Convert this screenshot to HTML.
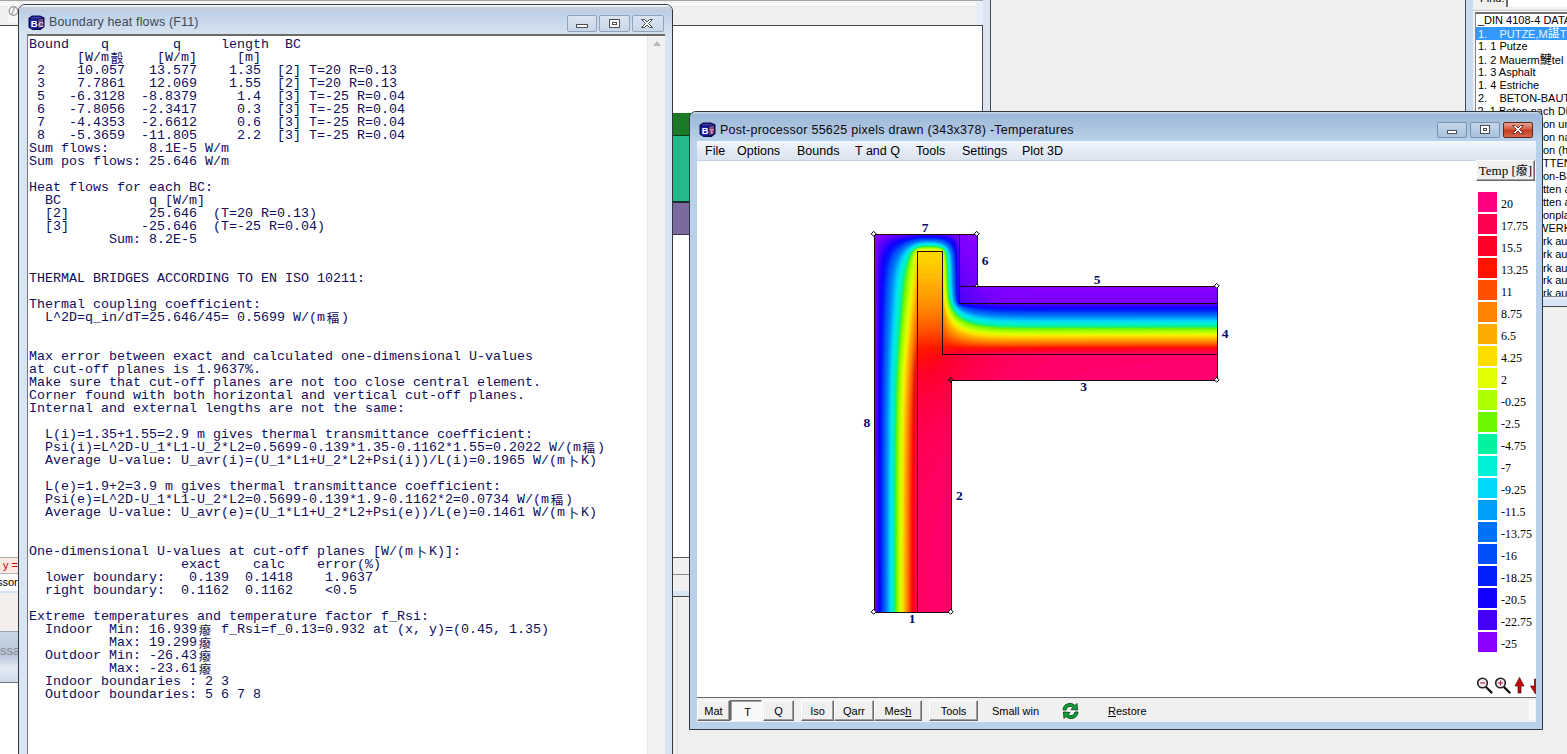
<!DOCTYPE html>
<html><head><meta charset="utf-8"><title>Boundary heat flows</title>
<style>
*{box-sizing:border-box;margin:0;padding:0}
html,body{width:1567px;height:754px;overflow:hidden;background:#f0f0f0}
body{position:relative;font-family:"Liberation Sans","Noto Sans CJK SC",sans-serif;font-size:12px;color:#000}
.a{position:absolute}
/* background app */
#bgwhite{left:0;top:26px;width:982px;height:531px;background:#fff}
#bgbot{left:0;top:557px;width:983px;height:1px;background:#555}
#bgw2{left:0;top:683px;width:19px;height:71px;background:#fff}
#ms1{left:672px;top:574px;width:18px;height:1px;background:#8c8c8c}
#ms2{left:672px;top:591px;width:18px;height:6px;background:#d7e4f2;border-bottom:1px solid #444}
#ms3{left:677px;top:598px;width:1px;height:156px;background:#dcdcdc}
#bgline{left:0;top:25px;width:983px;height:1px;background:#4a4a4a}
#bgvline{left:982px;top:25px;width:1px;height:533px;background:#4a4a4a}
#bgframe{left:983px;top:0;width:7px;height:120px;background:#dbe5f2}
#bgfline{left:990px;top:0;width:1px;height:120px;background:#3f4a55}
#topstrip{left:0;top:0;width:984px;height:7px;background:linear-gradient(#a4a4a4 0,#a4a4a4 1px,#f3f3f3 1px,#f3f3f3 3px,#fafafa 3px,#fafafa 6px,#e6e6e6 6px)}
#toppatch{left:976px;top:1px;width:7px;height:24px;background:#e8eef6}
/* left strip */
#ls1{left:0;top:557px;width:19px;height:17px;background:#fbe9e4;border-top:1px solid #a9a9a9;border-bottom:1px solid #b8b8b8;color:#c00000;font-size:11px;line-height:15px;padding-left:3px;white-space:nowrap;overflow:hidden}
#ls2{left:0;top:574px;width:19px;height:17px;background:#fff;font-size:11px;line-height:16px;white-space:nowrap;overflow:hidden}
#ls3{left:0;top:591px;width:19px;height:41px;background:#f3efec;border-top:2px solid #d3e1f0;border-bottom:1px solid #9aa3ad}
#ls4{left:0;top:632px;width:19px;height:51px;background:linear-gradient(#c9d6e5 0,#b6c6d9 45%,#e3eaf3 72%,#cfdae8 100%);border-bottom:1px solid #6f7a86;color:#878c93;font-size:13px;line-height:38px;white-space:nowrap;overflow:hidden}
/* colour bars */
#gb1{left:672px;top:113px;width:30px;height:22px;background:#1b7a26}
#gb2{left:672px;top:135px;width:30px;height:66px;background:#24b98a;border-top:1px solid #0d3a1a}
#gb3{left:672px;top:201px;width:30px;height:34px;background:#7a6a9e;border-top:2px solid #1d2a30;border-bottom:1px solid #3a3550}
/* windows */
.win{border:1px solid #2f3740;border-radius:7px 7px 0 0}
#w1{left:18px;top:4px;width:655px;height:760px;background:#d7e4f2}
#w1 .tb{left:-1px;top:0;width:653px;height:29px;border-radius:6px 6px 0 0;background:linear-gradient(#fdfeff 0,#fdfeff 1px,#c9d0de 2px,#c2cde0 5px,#bcd0e8 8px,#c4d4e8 12px,#d6e2ef 29px)}
#w1 .title{left:29px;top:9px;font-size:12.5px;letter-spacing:.16px;line-height:16px;color:#3e4a59;white-space:nowrap}
#w1 .client{left:7px;top:29px;width:638px;height:730px;background:#fff;border-left:1px solid #7a7a7a;border-top:2px solid #6a6a6a}
#w1 .sb{right:0;top:0;width:18px;height:730px;background:#f1f1f1;border-left:1px solid #e6e6e6}
#w1 pre{left:1px;top:2px;font-family:"Liberation Mono","Noto Sans CJK SC",monospace;font-size:13.333px;line-height:13px;color:#0d0d62;white-space:pre}
.cj{display:inline-block;width:16px;text-align:center;font-size:12.5px;line-height:13px;vertical-align:top;font-family:"Noto Sans CJK SC",sans-serif}
.cj2{font-family:"Noto Sans CJK SC",sans-serif;font-size:12px;line-height:12px}
.cbtn{top:10px;height:17px;border:1px solid #8fa3ba;border-radius:2px;background:linear-gradient(#dbe5f2,#c7d6e8)}
#w2{left:689px;top:111px;width:854px;height:619px;background:#b9d1ea;border-radius:7px 7px 0 0}
#w2 .tb{left:-1px;top:0;width:852px;height:29px;border-radius:6px 6px 0 0;background:linear-gradient(#d5e2f1 0,#9fb9d8 8%,#a9c2df 50%,#b9d1ea 100%)}
#w2 .title{left:29px;top:10px;font-size:12.5px;letter-spacing:.26px;line-height:16px;color:#0c0c0c;white-space:nowrap}
#w2 .menu{left:6px;top:29px;width:839px;height:20px;background:linear-gradient(#f3f6fb 0,#e4ebf5 50%,#d9e3f0 100%);border-bottom:1px solid #c3d1e2}
#w2 .menu span{position:absolute;top:2px;font-size:12.5px;line-height:16px;white-space:nowrap}
#w2 .client{left:6px;top:49px;width:839px;height:537px;background:#fff}
#w2 .tool{left:6px;top:585px;width:839px;height:25px;background:#f0f0f0;border-top:1px solid #6a6a6a}
.b3{position:absolute;top:2px;height:21px;background:#f0f0f0;border:1px solid;border-color:#fff #696969 #696969 #fff;box-shadow:inset -1px -1px 0 #a0a0a0;font-size:11px;line-height:21px;text-align:center;white-space:nowrap}
.b3.dn{border-color:#696969 #fff #fff #696969;box-shadow:inset 1px 1px 0 #a0a0a0;background:#f8f8f8;line-height:23px}
.tt{position:absolute;top:2px;font-size:11px;line-height:23px;white-space:nowrap}
/* legend */
.lb{position:absolute;left:1478px;width:19px;height:20px}
.lt{position:absolute;left:1501px;font-family:"Liberation Serif",serif;font-size:12px;line-height:14px;white-space:nowrap}
#tempbtn{left:1476px;top:160px;width:59px;height:21px;background:#f0f0f0;border:1px solid;border-color:#fff #696969 #696969 #fff;box-shadow:inset -1px -1px 0 #a0a0a0;font-family:"Liberation Serif","Noto Sans CJK SC",serif;font-size:13px;line-height:19px;text-align:center;white-space:nowrap}
.bn{position:absolute;width:20px;text-align:center;font-family:"Liberation Serif",serif;font-weight:bold;font-size:13.5px;line-height:14px;color:#06066a}
/* right panel */
#rp{left:1465px;top:0;width:102px;height:307px;background:#f0f0f0;border-left:1px solid #3f4a55;border-bottom:1px solid #3f4a55}
#rpf{left:1466px;top:0;width:7px;height:306px;background:#c9dbee}
#rpb{left:1466px;top:297px;width:101px;height:9px;background:linear-gradient(#eef2f8 0,#d7e4f2 35%,#d7e4f2 100%)}
#lbx{left:1475px;top:12px;width:100px;height:285px;border-bottom:0;background:#fff;border:1px solid #828790;border-top:2px solid #6d6d6d}
.li{position:absolute;left:1478px;height:13px;font-size:11px;line-height:13px;white-space:nowrap}
.li.sel{background:#3399ff;color:#e6f6ff;width:100px;left:1476px;padding-left:2px}
</style></head><body>
<div class="a" id="topstrip"></div><div class="a" id="toppatch"></div>
<div class="a" id="bgwhite"></div><div class="a" id="bgbot"></div><div class="a" id="bgw2"></div><div class="a" id="ms1"></div><div class="a" id="ms2"></div><div class="a" id="ms3"></div><div class="a" id="bgline"></div><div class="a" id="bgvline"></div>
<div class="a" id="bgframe"></div><div class="a" id="bgfline"></div>
<svg class="a" style="left:6px;top:1px" width="14" height="23" viewBox="0 0 14 23"><rect x="2" y="1" width="12" height="21" fill="#f7f7f7"/><circle cx="7.500" cy="10" r="4.300" fill="#fcfcfc" stroke="#9c9c9c" stroke-width="1.400"/><path d="M5.500 13.500L9 5.500" stroke="#a6a6a6" stroke-width="1.300" fill="none"/></svg>
<div class="a" id="ls1">y =</div><div class="a" id="ls2"><span style="margin-left:-3px">ssor</span></div><div class="a" id="ls3"></div><div class="a" id="ls4">ssa</div>
<div class="a" id="gb1"></div><div class="a" id="gb2"></div><div class="a" id="gb3"></div>

<!-- right panel -->
<div class="a" id="rp"></div><div class="a" id="rpf"></div><div class="a" id="rpb"></div>
<div class="a" style="left:1480px;top:-8px;font-size:11px;line-height:13px">Find:</div>
<div class="a" style="left:1506px;top:-6px;width:70px;height:13px;background:#fff;border-left:2px solid #6d6d6d"></div><div class="a" style="left:1473px;top:10px;width:94px;height:2px;background:linear-gradient(#c8c8c8 50%,#fff 50%)"></div>
<div class="a" id="lbx"></div>
<div class="li" style="top:14px">_DIN 4108-4 DATA</div>
<div class="li sel" style="top:27px">1.&nbsp;&nbsp;&nbsp;&nbsp;PUTZE,M<span class=cj2>諶</span>TEL</div>
<div class="li" style="top:40px">1. 1 Putze</div>
<div class="li" style="top:53px">1. 2 Mauerm<span class=cj2>鰎</span>tel</div>
<div class="li" style="top:66px">1. 3 Asphalt</div>
<div class="li" style="top:79px">1. 4 Estriche</div>
<div class="li" style="top:92px">2.&nbsp;&nbsp;&nbsp;&nbsp;BETON-BAUTEILE</div>
<div class="li" style="top:105px;left:auto;right:24px">2. 1 Beton na</div><div class="li" style="top:105px;left:1543px">ch DIN EN 206</div>
<div class="li" style="top:118px;left:auto;right:24px">2. 2 Leichtbet</div><div class="li" style="top:118px;left:1543px">on und Stahlleichtbeton</div>
<div class="li" style="top:131px;left:auto;right:24px">2. 3 Porenbet</div><div class="li" style="top:131px;left:1543px">on nach DIN 4223</div>
<div class="li" style="top:144px;left:auto;right:24px">2. 4 Leichtbet</div><div class="li" style="top:144px;left:1543px">on (haufwerkporig)</div>
<div class="li" style="top:157px;left:auto;right:24px">3.&nbsp;&nbsp;&nbsp;&nbsp;BAUPLA</div><div class="li" style="top:157px;left:1543px">TTEN</div>
<div class="li" style="top:170px;left:auto;right:24px">3. 1 Porenbet</div><div class="li" style="top:170px;left:1543px">on-Bauplatten</div>
<div class="li" style="top:183px;left:auto;right:24px">3. 2 Wandbaupla</div><div class="li" style="top:183px;left:1543px">tten aus Leichtbeton</div>
<div class="li" style="top:196px;left:auto;right:24px">3. 3 Wandbaupla</div><div class="li" style="top:196px;left:1543px">tten aus Gips</div>
<div class="li" style="top:209px;left:auto;right:24px">3. 4 Gipskart</div><div class="li" style="top:209px;left:1543px">onplatten</div>
<div class="li" style="top:222px;left:auto;right:24px">4.&nbsp;&nbsp;&nbsp;&nbsp;MAUER</div><div class="li" style="top:222px;left:1543px"><span style="margin-left:-5px">WERK</span></div>
<div class="li" style="top:235px;left:auto;right:24px">4. 1 Mauerwe</div><div class="li" style="top:235px;left:1543px">rk aus Mauerziegeln</div>
<div class="li" style="top:248px;left:auto;right:24px">4. 2 Mauerwe</div><div class="li" style="top:248px;left:1543px">rk aus Kalksandsteinen</div>
<div class="li" style="top:261px;left:auto;right:24px">4. 3 Mauerwe</div><div class="li" style="top:261px;left:1543px">rk aus H<span class=cj2>黷</span>tensteinen</div>
<div class="li" style="top:274px;left:auto;right:24px">4. 4 Mauerwe</div><div class="li" style="top:274px;left:1543px">rk aus Porenbeton</div>
<div class="li" style="top:287px;left:auto;right:24px;height:9px;overflow:hidden">4. 5 Mauerwe</div><div class="li" style="top:287px;left:1543px;height:9px;overflow:hidden">rk aus Betonsteinen</div>


<!-- left window -->
<div class="a win" id="w1"><div class="a" style="left:1px;top:0;width:652px;height:758px">
 <div class="a tb"></div>
 <svg class="a" style="left:8px;top:10px" width="17" height="16" viewBox="0 0 17 16"><path d="M4,0.500H12L16.500,2.500V12L12.500,15H4.500L0.500,12.500V3Z" fill="#0b0b55"/><path d="M2,4.500H9V13.500H3.500L2,12.500Z" fill="#2424b4"/><path d="M3,2.500L5,1.800H11.500L14.500,3L9.500,3.800H3Z" fill="#3a3ab0"/><path d="M10.200,4.500L15,3.500V11.500L10.200,13.500Z" fill="#6d4f86"/><text x="2.700" y="12.300" font-family="Liberation Sans,sans-serif" font-weight="bold" font-size="9.500" fill="#fff">B</text><text x="10.300" y="11.600" font-family="Liberation Sans,sans-serif" font-weight="bold" font-size="7.500" fill="#e8cfe4">C</text></svg>
 <div class="a title">Boundary heat flows (F11)</div>
 <div class="a cbtn" style="left:547px;width:30px"></div>
 <div class="a cbtn" style="left:579px;width:31px"></div>
 <div class="a cbtn" style="left:612px;width:32px"></div>
 <svg class="a" style="left:547px;top:10px" width="98" height="18" viewBox="0 0 98 18"><g fill="#fff" stroke="#4a4f57" stroke-width="1"><rect x="9.5" y="9.5" width="11" height="3"/><rect x="42.5" y="4.5" width="10" height="8"/><rect x="45.5" y="7.5" width="4" height="2"/><path d="M74.500 4.500h3l2.500 2.500 2.500-2.500h3l-4 4 4 4h-3l-2.500-2.500-2.500 2.500h-3l4-4z"/></g></svg>
 <div class="a client"><div class="a sb"><svg class="a" style="left:5px;top:5px" width="8" height="5"><path d="M0 5L4 0L8 5Z" fill="#b9b9b9"/></svg></div><pre class="a">Bound    q        q     length  BC
      [W/m<span class="cj">瞉</span>    [W/m]     [m]
 2    10.057   13.577    1.35  [2] T=20 R=0.13
 3    7.7861   12.069    1.55  [2] T=20 R=0.13
 5   -6.3128  -8.8379     1.4  [3] T=-25 R=0.04
 6   -7.8056  -2.3417     0.3  [3] T=-25 R=0.04
 7   -4.4353  -2.6612     0.6  [3] T=-25 R=0.04
 8   -5.3659  -11.805     2.2  [3] T=-25 R=0.04
Sum flows:     8.1E-5 W/m
Sum pos flows: 25.646 W/m

Heat flows for each BC:
  BC           q [W/m]
  [2]          25.646  (T=20 R=0.13)
  [3]         -25.646  (T=-25 R=0.04)
          Sum: 8.2E-5


THERMAL BRIDGES ACCORDING TO EN ISO 10211:

Thermal coupling coefficient:
  L^2D=q_in/dT=25.646/45= 0.5699 W/(m<span class="cj">稫</span>)


Max error between exact and calculated one-dimensional U-values
at cut-off planes is 1.9637%.
Make sure that cut-off planes are not too close central element.
Corner found with both horizontal and vertical cut-off planes.
Internal and external lengths are not the same:

  L(i)=1.35+1.55=2.9 m gives thermal transmittance coefficient:
  Psi(i)=L^2D-U_1*L1-U_2*L2=0.5699-0.139*1.35-0.1162*1.55=0.2022 W/(m<span class="cj">稫</span>)
  Average U-value: U_avr(i)=(U_1*L1+U_2*L2+Psi(i))/L(i)=0.1965 W/(m<span class="cj">卜</span>K)

  L(e)=1.9+2=3.9 m gives thermal transmittance coefficient:
  Psi(e)=L^2D-U_1*L1-U_2*L2=0.5699-0.139*1.9-0.1162*2=0.0734 W/(m<span class="cj">稫</span>)
  Average U-value: U_avr(e)=(U_1*L1+U_2*L2+Psi(e))/L(e)=0.1461 W/(m<span class="cj">卜</span>K)


One-dimensional U-values at cut-off planes [W/(m<span class="cj">卜</span>K)]:
                   exact    calc    error(%)
  lower boundary:   0.139  0.1418    1.9637
  right boundary:  0.1162  0.1162    &lt;0.5

Extreme temperatures and temperature factor f_Rsi:
  Indoor  Min: 16.939<span class="cj">癈</span> f_Rsi=f_0.13=0.932 at (x, y)=(0.45, 1.35)
          Max: 19.299<span class="cj">癈</span>
  Outdoor Min: -26.43<span class="cj">癈</span>
          Max: -23.61<span class="cj">癈</span>
  Indoor boundaries : 2 3
  Outdoor boundaries: 5 6 7 8</pre></div>
</div></div>

<!-- post-processor window -->
<div class="a win" id="w2"><div class="a" style="left:1px;top:0;width:851px;height:617px">
 <div class="a tb"></div>
 <svg class="a" style="left:8px;top:10px" width="17" height="16" viewBox="0 0 17 16"><path d="M4,0.500H12L16.500,2.500V12L12.500,15H4.500L0.500,12.500V3Z" fill="#0b0b55"/><path d="M2,4.500H9V13.500H3.500L2,12.500Z" fill="#2424b4"/><path d="M3,2.500L5,1.800H11.500L14.500,3L9.500,3.800H3Z" fill="#3a3ab0"/><path d="M10.200,4.500L15,3.500V11.500L10.200,13.500Z" fill="#6d4f86"/><text x="2.700" y="12.300" font-family="Liberation Sans,sans-serif" font-weight="bold" font-size="9.500" fill="#fff">B</text><text x="10.300" y="11.600" font-family="Liberation Sans,sans-serif" font-weight="bold" font-size="7.500" fill="#ff8fa0">T</text></svg>
 <div class="a title">Post-processor 55625 pixels drawn (343x378) -Temperatures</div>
 <div class="a cbtn" style="left:746px;top:10px;width:30px;height:16px;border-color:#7a93b3;background:linear-gradient(#c5d6ea,#a9c0dc)"></div>
 <div class="a cbtn" style="left:779px;top:10px;width:30px;height:16px;border-color:#7a93b3;background:linear-gradient(#c5d6ea,#a9c0dc)"></div>
 <div class="a cbtn" style="left:812px;top:10px;width:30px;height:16px;border-color:#5a2a20;background:linear-gradient(#e9a394 0,#d6593f 45%,#c13a1e 50%,#d8694a 100%)"></div>
 <svg class="a" style="left:744px;top:10px" width="100" height="17" viewBox="0 0 100 17"><g fill="#fff" stroke="#4a4f57" stroke-width="1"><rect x="12.500" y="8.500" width="9" height="3"/><rect x="45.500" y="3.500" width="9" height="8"/><rect x="48.500" y="6.500" width="3" height="2"/><path d="M77.500 3.500h3l2.500 2.500 2.500-2.500h3l-4 4 4 4h-3l-2.500-2.500-2.500 2.500h-3l4-4z" stroke="#6a3a30"/></g></svg>
 <div class="a menu"><span style="left:8px">File</span><span style="left:40px">Options</span><span style="left:100px">Bounds</span><span style="left:158px">T and Q</span><span style="left:219px">Tools</span><span style="left:265px">Settings</span><span style="left:325px">Plot 3D</span></div>
 <div class="a client"></div>
 <div class="a tool">
  <div class="b3" style="left:0;width:33px">Mat</div><div class="b3 dn" style="left:33px;width:32px;padding-left:3px">T</div><div class="b3" style="left:66px;width:31px">Q</div>
  <div class="b3" style="left:104px;width:33px">Iso</div><div class="b3" style="left:137px;width:40px">Qarr</div><div class="b3" style="left:177px;width:48px">Mes<u>h</u></div>
  <div class="b3" style="left:232px;width:49px">Tools</div>
  <div class="tt" style="left:295px">Small win</div>
  <svg class="a" style="left:364px;top:4px" width="19" height="18" viewBox="0 0 19 18"><g fill="#12a03a" stroke="#0a4a1a" stroke-width=".9"><path d="M2 8 A7 7 0 0 1 14 3.500 L16 1.500 L16.500 8 L10 7.500 L12 5.500 A4.200 4.200 0 0 0 5 8 Z"/><path d="M17 10 A7 7 0 0 1 5 14.500 L3 16.500 L2.500 10 L9 10.500 L7 12.500 A4.200 4.200 0 0 0 14 10 Z"/></g></svg>
  <div class="tt" style="left:411px"><u>R</u>estore</div>
  <div class="a" style="right:1px;top:2px;width:6px;height:20px;background:#f7f7f7;border-left:1px solid #fff;border-right:1px solid #fdfdfd"></div>
 </div>
</div></div>

<!-- plot -->
<svg class="a" style="left:865px;top:224px" width="365" height="400" viewBox="-10 -10 365 400">
<defs><clipPath id="dom"><path d="M-1,0H102V52H343V146H76V378.500H-1Z"/></clipPath></defs>
<g clip-path="url(#dom)"><rect x="-2" y="-2" width="347" height="382" fill="#8700ff"/><path fill="#7e00fe" d="M16.2,-1.5 79.5,-1.5 79.5,0.5 82.5,1.2 83.4,1.5 84.4,2.5 84.5,2.8 86.5,3.2 89.5,4.4 92.5,6.2 94.5,7.8 96.5,9.8 98.5,12.3 99.8,14.5 101.5,17.8 136.5,17.8 136.8,18.5 134.4,21.5 134,22.5 134,53.5 136.5,54 146.5,55.5 156.5,56.6 168.5,57.3 182.5,57.7 217.5,57.9 344.5,57.9 344.5,379.5 -1.5,379.5 -1.5,19.2 0.5,19.2 0.8,12.5 1.3,8.5 2.1,5.5 2.5,4.5 3.3,3.5 4.5,2.5 5.5,2 7.2,1.5 10.5,0.9 16.2,0.5Z"/><path fill="#7500fd" d="M28.3,-1.5 73.9,-1.5 73.9,0.5 78.5,1 80.3,1.5 81.5,2 82.5,2.9 82.9,3.5 83.3,4.5 84.1,8.5 84.5,13.3 87.2,15.5 89.5,17.9 92.2,21.5 94.1,24.5 96.1,28.5 97.8,32.5 99.5,36.9 101.5,42.9 111.5,42.9 111.6,43.5 108.4,47.5 108.1,48.5 108.1,53.5 127.5,64.1 132.5,66.5 137.6,68.5 179.5,68.7 344.5,68.8 344.5,379.5 -1.5,379.5 -1.5,79.4 0.5,79.4 0.7,35.5 1,24.5 1.4,17.5 1.9,12.5 2.3,10.5 2.8,8.5 3.7,6.5 4.5,5.3 5.5,4.3 6.7,3.5 8.5,2.7 10.5,2.1 12.5,1.7 18.5,1 28.3,0.5Z"/><path fill="#6b00fd" d="M37.6,-1.5 67.8,-1.5 67.8,0.5 73.5,0.8 77.5,1.4 79.5,2 80.5,2.5 81.5,3.3 82.4,4.5 82.7,5.5 83.3,8.5 84.1,15.5 84.5,24.6 87.5,29 90.5,34.1 93.5,39.8 98.4,49.5 100.7,53.5 102.5,55.7 110.6,63.5 115.2,68.5 133.5,69.1 160.5,69.4 344.5,69.4 344.5,379.5 0.6,379.5 0.7,172.5 0.9,75.5 1.2,36.5 1.6,25.5 2.1,18.5 2.4,15.5 3,12.5 3.5,10.5 4.3,8.5 5.5,6.7 6.5,5.6 8.5,4.2 10.1,3.5 12.5,2.7 15.5,2.1 18.5,1.7 26.5,1 37.6,0.5Z"/><path fill="#6200fc" d="M25.2,1.5 33.5,0.9 43.5,0.6 56.5,0.5 66.5,0.7 71.5,1 75.6,1.5 78.5,2.3 79.5,2.8 80.6,3.5 81.5,4.5 82.4,6.5 82.9,8.5 83.2,10.5 84,21.5 84.5,37.7 94.8,53.5 102.8,64.5 105.3,68.5 114.5,69.1 123.2,69.5 144.5,69.7 344.5,69.8 344.5,379.5 0.9,379.5 0.9,197.5 1.1,115.5 1.5,49.5 1.7,35.5 2.2,25.5 2.8,18.5 3.8,13.5 4.4,11.5 5.3,9.5 6.5,7.6 7.5,6.6 8.8,5.5 10.5,4.6 13.5,3.4 18.5,2.3Z"/><path fill="#5900fb" d="M29.6,1.5 37.5,1 46.5,0.7 58.5,0.7 67.5,1 72.5,1.4 76.5,2.2 78.5,2.9 79.5,3.5 80.5,4.4 81.5,5.8 82.1,7.5 82.8,10.5 83.1,13.5 83.8,26.5 84.5,49.1 90.5,56.5 93.5,60.5 96.2,64.5 98.4,68.5 110.7,69.5 124.5,69.9 142.5,70.1 344.5,70.2 344.5,379.5 1.2,379.5 1.2,199.5 1.4,118.5 1.9,50.5 2.2,36.5 2.7,26.5 3.4,19.5 4,16.5 4.5,14.4 5.1,12.5 6,10.5 7.3,8.5 8.5,7.3 9.5,6.4 11.5,5.2 13.5,4.4 16.2,3.5 21.5,2.4Z"/><path fill="#4f00fb" d="M33.6,1.5 41.5,1.1 50.5,0.9 61.5,1 68.5,1.3 73.5,1.9 76.5,2.7 78.5,3.6 79.7,4.5 80.5,5.4 81.5,7.2 82.2,9.5 82.7,12.5 83,15.5 83.3,21.5 84.5,57.6 87.5,60.8 89.5,63.2 91.1,65.5 92.8,68.5 103.2,69.5 108.5,69.7 122.5,70.2 139.5,70.4 179.5,70.5 344.5,70.5 344.5,379.5 1.5,379.5 1.5,201.5 1.7,121.5 2.3,52.5 2.6,37.5 3.2,27.5 3.6,23.5 4.2,19.5 4.8,16.5 5.4,14.5 6.2,12.5 7.2,10.5 8.5,8.8 9.9,7.5 11.5,6.3 13.5,5.3 15.5,4.5 18.5,3.6 21.5,3 25.5,2.3Z"/><path fill="#4600fa" d="M37.5,1.5 45.5,1.2 54.5,1.1 62.5,1.2 68.5,1.6 72.5,2.1 75.5,2.8 77.3,3.5 78.5,4.2 79.9,5.5 80.6,6.5 81.1,7.5 81.8,9.5 82.4,12.5 82.8,16.5 83.2,24.5 83.8,47.5 84.5,64.2 86.5,66.2 88.1,68.5 97.7,69.5 107.5,70 121.5,70.5 138.5,70.7 177.5,70.9 344.5,70.9 344.5,379.5 1.8,379.5 1.8,202.5 2.1,122.5 2.7,52.5 3.1,37.5 3.8,27.5 4.2,23.5 4.9,19.5 5.6,16.5 6.3,14.5 7.2,12.5 8.5,10.5 9.5,9.2 11.5,7.5 13,6.5 15,5.5 17.7,4.5 20.5,3.7 24.5,2.9 28.5,2.3Z"/><path fill="#3f00fb" d="M41.7,1.5 49.5,1.3 57.5,1.3 64.5,1.5 69.5,1.9 73.5,2.6 76.2,3.5 77.5,4.2 78.5,4.9 80,6.5 81,8.5 81.7,10.5 82.2,13.5 82.7,18.5 83.1,27.5 83.5,49.1 84.5,68.5 93.4,69.5 106.5,70.3 120.5,70.8 136.5,71.1 175.5,71.2 344.5,71.2 344.5,379.5 2.1,379.5 2.1,202.5 2.4,122.5 2.8,77.5 3.1,52.5 3.6,37.5 4.3,27.5 4.8,23.5 5.5,20 6.1,17.5 7.2,14.5 8.2,12.5 9.5,10.7 10.5,9.5 12.5,7.8 14.7,6.5 16.9,5.5 19.9,4.5 23.5,3.6 27.5,2.9 31.5,2.3 36.5,1.8Z"/><path fill="#3900fb" d="M48,1.5 55.5,1.5 62.5,1.6 67.5,2 71.4,2.5 74.5,3.3 77.2,4.5 78.5,5.5 79.4,6.5 80.1,7.5 81,9.5 81.6,11.5 82.1,14.5 82.5,18.5 82.9,27.5 83.5,56.7 84.1,65.5 84.3,68.5 84.5,68.7 90.2,69.5 106.5,70.6 120.5,71.1 136.5,71.4 175.5,71.6 344.5,71.6 344.5,379.5 2.4,379.5 2.4,202.5 2.7,122.5 3.1,77.5 3.5,52.5 4.1,37.5 4.9,27.5 5.5,23.5 6.1,20.5 6.9,17.5 8.1,14.5 9.3,12.5 10.8,10.5 12.5,8.9 14.5,7.5 16.5,6.4 19.5,5.2 23.5,4.1 27.5,3.3 32.5,2.5 37.5,2 42.5,1.7Z"/><path fill="#3200fc" d="M35,2.5 42.5,1.9 51.5,1.6 60.5,1.7 67.5,2.2 70.5,2.6 72.5,3.1 75.5,4.1 76.5,4.6 77.8,5.5 78.8,6.5 79.5,7.4 80.5,9.3 81.2,11.5 81.8,14.5 82.3,18.5 82.7,27.5 83.5,62 84,67.5 84.2,68.5 84.5,68.8 88.5,69.6 105.5,70.8 119.5,71.4 135.5,71.8 174.5,71.9 344.5,71.9 344.5,379.5 2.7,379.5 2.7,212.5 3,134.5 3.3,93.5 3.8,59.5 4.2,43.5 4.9,32.5 5.3,28.5 5.9,24.5 6.5,21.5 7.4,18.5 8.5,15.6 9.5,13.7 10.5,12.2 12,10.5 13.5,9.1 15.5,7.8 17.9,6.5 20.4,5.5 23.5,4.6 26.5,3.9 30.5,3.1Z"/><path fill="#2b00fd" d="M37.5,2.5 44.5,2 52.5,1.8 61.5,2 67.5,2.4 71.5,3.1 74.5,4.1 75.5,4.5 77.1,5.5 78.2,6.5 79,7.5 80.2,9.5 81.1,12.5 81.7,15.5 82.2,19.5 82.6,27.5 83.1,54.5 83.5,65.5 84.1,68.5 84.5,69 86.4,69.5 97.5,70.6 109.5,71.4 122.5,71.9 138.5,72.1 176.5,72.3 344.5,72.3 344.5,379.5 2.9,379.5 3,213.5 3.3,136.5 3.7,95.5 4.2,60.5 4.6,44.5 5.3,33.5 5.9,28.5 6.5,24.6 7.2,21.5 8.1,18.5 8.9,16.5 9.9,14.5 11.3,12.5 13.1,10.5 15.5,8.6 17.3,7.5 19.4,6.5 22.1,5.5 25.5,4.5 29.5,3.6 33.5,3Z"/><path fill="#2500fd" d="M40.1,2.5 47.5,2.1 55.5,2 62.5,2.2 68.5,2.8 72.5,3.7 75.5,5 76.5,5.6 77.6,6.5 78.5,7.5 79.2,8.5 80.2,10.5 81.1,13.5 81.6,16.5 82,20.5 82.4,29.5 83,57.5 83.5,66.5 83.9,68.5 84.5,69.1 85.5,69.5 89.5,70 95.5,70.7 107.5,71.6 120.5,72.1 136.5,72.5 174.5,72.6 344.5,72.6 344.5,379.5 3.2,379.5 3.3,213.5 3.6,136.5 4,96.5 4.5,61.5 5.1,44.5 5.8,33.5 6.3,29.5 6.9,25.5 7.6,22.5 8.5,19.4 9.7,16.5 10.8,14.5 12.2,12.5 14.2,10.5 16.5,8.7 18.5,7.6 20.9,6.5 23.6,5.5 27.2,4.5 31.5,3.6 35.5,3Z"/><path fill="#1e00fe" d="M43,2.5 49.5,2.2 57.5,2.2 63.5,2.5 68.5,3.1 71.5,3.7 74.5,4.8 75.7,5.5 77,6.5 78,7.5 78.8,8.5 79.8,10.5 80.8,13.5 81.4,16.5 81.8,20.5 82.2,29.5 82.9,57.5 83.3,66.5 83.5,67.5 83.8,68.5 84.5,69.3 85.5,69.6 88.5,70.1 94.5,70.8 107.5,71.9 120.5,72.5 136.5,72.8 174.5,73 344.5,73 344.5,379.5 3.5,379.5 3.6,213.5 3.9,136.5 4.4,96.5 4.9,61.5 5.5,44.5 6.3,33.5 6.8,29.5 7.5,25.5 8.2,22.5 9.2,19.5 10.5,16.5 11.7,14.5 13.2,12.5 15.2,10.5 17.5,8.9 20,7.5 23.5,6 26.5,5.1 30.5,4.1 33.9,3.5 38.5,2.9Z"/><path fill="#1700ff" d="M47,2.5 53.5,2.4 60.5,2.5 65.5,2.9 69.5,3.5 72.9,4.5 75.5,5.8 76.5,6.5 77.5,7.5 78.9,9.5 79.9,11.5 80.7,14.5 81.3,17.5 81.7,21.5 82.1,29.5 82.7,57.5 83.2,66.5 83.6,68.5 84.5,69.4 85.5,69.8 88.5,70.3 94.5,71.1 106.5,72.1 119.5,72.8 135.5,73.2 173.5,73.3 344.5,73.3 344.5,379.5 3.8,379.5 3.9,213.5 4.2,136.5 4.7,96.5 5.3,61.5 6,44.5 6.3,38.5 6.8,33.5 7.4,29.5 8.1,25.5 8.8,22.5 9.9,19.5 11.3,16.5 12.5,14.5 14.1,12.5 16.3,10.5 18.5,9 21.2,7.5 24.5,6.2 28.5,5 32.5,4 37.5,3.2 42.5,2.7Z"/><path fill="#1302ff" d="M37.5,3.5 43.5,2.9 51.5,2.6 59.5,2.7 65.5,3.1 69.5,3.8 71.5,4.3 73.5,5.1 75.9,6.5 77,7.5 77.9,8.5 79.1,10.5 79.9,12.5 80.7,15.5 81.2,18.5 81.5,22.5 81.8,27.5 82.4,54.5 82.9,64.5 83.2,67.5 83.5,68.5 84.5,69.6 85.5,69.9 89.5,70.7 94.5,71.3 106.5,72.4 119.5,73.1 135.5,73.5 173.5,73.7 344.5,73.7 344.5,379.5 4.1,379.5 4.2,219.5 4.5,143.5 4.9,106.5 5.6,67.5 6.1,49.5 6.9,37.5 7.9,29.5 8.7,25.5 9.5,22.5 10.5,19.6 11.5,17.5 12.6,15.5 14.5,13.1 16.1,11.5 18.5,9.7 20.5,8.5 23.5,7 26.5,5.9 29.5,5.1 33.5,4.2Z"/><path fill="#1006fe" d="M39.3,3.5 45.5,3 53.5,2.8 60.5,2.9 66.5,3.5 70.5,4.3 73.6,5.5 75.3,6.5 76.5,7.5 78.1,9.5 79.2,11.5 80.2,14.5 80.8,17.5 81.3,21.5 81.7,30.5 82.4,57.5 82.6,62.5 83,66.5 83.1,67.5 83.5,68.7 84.5,69.7 86.5,70.3 90.5,71 95.5,71.7 106.5,72.8 119.5,73.5 135.5,73.8 173.5,74.1 344.5,74 344.5,379.5 4.4,379.5 4.5,219.5 4.8,143.5 5.2,106.5 6,67.5 6.6,49.5 7.4,37.5 7.9,32.5 8.5,29 9.2,25.5 10.1,22.5 11.2,19.5 12.2,17.5 13.5,15.4 15.5,13 17,11.5 19.5,9.7 21.5,8.5 24.5,7.1 27.5,6 31.5,4.9 35.5,4.1Z"/><path fill="#0d0afd" d="M41.3,3.5 47.5,3.1 54.5,2.9 61.5,3.2 66.5,3.7 70.5,4.6 73.5,5.8 74.7,6.5 76,7.5 77,8.5 77.7,9.5 78.9,11.5 79.9,14.5 80.5,17.5 81.1,21.5 81.5,30.5 82.2,57.5 82.5,62.5 82.8,66.5 83.3,68.5 84.1,69.5 84.5,69.8 85.5,70.2 87.5,70.7 91.5,71.4 96.5,72.1 107.5,73.1 120.5,73.8 136.5,74.2 173.5,74.4 344.5,74.4 344.5,379.5 4.7,379.5 4.8,220.5 5.1,144.5 5.6,107.5 6.4,68.5 7,50.5 7.7,38.5 8.3,33.5 8.9,29.5 9.6,26.5 10.5,23.2 11.5,20.4 12.9,17.5 14.2,15.5 15.8,13.5 18,11.5 20.5,9.7 22.6,8.5 25.5,7.2 28.5,6.1 32.5,5 36.5,4.2Z"/><path fill="#0b0efd" d="M43.5,3.5 50.5,3.2 57.5,3.2 63.5,3.6 67.5,4.1 70.5,4.9 73.5,6.2 75.5,7.5 76.5,8.5 77.5,9.7 78.5,11.5 79.6,14.5 80.3,17.5 80.8,21.5 81.4,30.5 82.1,57.5 82.3,62.5 82.7,66.5 83.1,68.5 84,69.5 84.5,69.9 87.5,70.9 91.5,71.6 96.5,72.4 107.5,73.5 119.5,74.1 135.5,74.5 172.5,74.8 344.5,74.7 344.5,379.5 5,379.5 5.1,220.5 5.4,144.5 5.9,107.5 6.7,68.5 7.4,50.5 8.2,38.5 9.3,30.5 10.1,26.5 11,23.5 12.1,20.5 13.5,17.8 15,15.5 16.7,13.5 18.9,11.5 21.5,9.7 24.5,8.1 27.5,6.8 31.5,5.5 35.5,4.6 39.5,3.9Z"/><path fill="#0812fc" d="M46.4,3.5 52.5,3.3 59.5,3.5 64.5,3.9 68.1,4.5 71.4,5.5 73.5,6.5 75,7.5 76.1,8.5 77.6,10.5 78.7,12.5 79.6,15.5 80.3,18.5 80.7,22.5 81.2,30.5 81.9,57.5 82.2,62.5 82.6,66.5 83,68.5 83.8,69.5 84.5,70.1 87.5,71 91.5,71.9 95.5,72.5 100.5,73.1 106.5,73.7 119.5,74.5 135.5,74.9 172.5,75.1 344.5,75.1 344.5,379.5 5.3,379.5 5.4,219.5 5.7,143.5 6.3,106.5 7.2,67.5 7.8,49.5 8.2,43.5 8.8,37.5 9.3,33.5 10,29.5 11,25.5 11.9,22.5 13.2,19.5 15,16.5 16.6,14.5 18.5,12.5 21.1,10.5 23.5,9.1 26.8,7.5 30.5,6.2 34.5,5.1 38.5,4.3 42.5,3.8Z"/><path fill="#0516fb" d="M38.9,4.5 44.5,3.8 51.5,3.5 58.5,3.6 64.5,4.1 68.5,4.8 71.5,5.8 72.9,6.5 74.4,7.5 75.5,8.4 76.5,9.5 77.9,11.5 79.1,14.5 79.9,17.5 80.4,21.5 81,30.5 81.7,57.5 82,62.5 82.5,66.5 82.9,68.5 83.5,69.3 84.5,70.2 86.5,70.9 88.5,71.5 92.5,72.3 96.5,72.9 101.5,73.5 107.5,74.1 119.5,74.8 135.5,75.2 172.5,75.5 344.5,75.4 344.5,379.5 5.6,379.5 5.6,223.5 6,148.5 6.5,113.1 7.3,74.5 8,54.5 8.8,41.5 9.4,36.5 10,32.5 10.7,28.5 11.5,25.5 12.5,22.5 13.9,19.5 15,17.5 16.5,15.5 18.3,13.5 20.6,11.5 22.5,10.2 25.6,8.5 28.5,7.2 31.5,6.2 35.5,5.1Z"/><path fill="#031afb" d="M40.3,4.5 46.5,3.9 53.5,3.7 60.5,3.9 65.5,4.5 69.5,5.4 72.5,6.6 73.9,7.5 75.2,8.5 76.9,10.5 78,12.5 79.1,15.5 79.8,18.5 80.3,22.5 80.8,30.5 81.6,57.5 81.9,62.5 82.3,66.5 82.8,68.5 83.5,69.5 84.5,70.3 86.5,71.1 89.5,71.9 93.5,72.7 97.5,73.3 102.5,73.9 108.5,74.5 120.5,75.2 136.5,75.6 172.5,75.8 344.5,75.8 344.5,379.5 5.8,379.5 5.9,223.5 6.3,148.5 6.8,113.5 7.7,74.5 8.4,54.5 9.3,41.5 9.8,36.5 10.4,32.5 11.3,28.5 12.1,25.5 13.1,22.5 14,20.5 15.7,17.5 17.2,15.5 19.1,13.5 21.4,11.5 23.5,10.1 26.5,8.5 29.5,7.2 32.5,6.2 36.5,5.2Z"/><path fill="#001efa" d="M42,4.5 47.5,4 54.5,3.9 60.5,4.1 65.5,4.7 69.5,5.6 72.5,6.9 74.7,8.5 76.5,10.5 77.7,12.5 78.9,15.5 79.6,18.5 80.1,22.5 80.6,30.5 81.4,57.5 81.7,62.5 82.2,66.5 82.7,68.5 83.5,69.6 84.5,70.4 86.5,71.3 89.5,72.1 93.5,72.9 98.5,73.7 108.5,74.8 120.5,75.5 136.5,76 172.5,76.2 344.5,76.1 344.5,379.5 6.1,379.5 6.2,223.5 6.6,148.5 7.2,113.5 8.1,74.5 8.8,54.5 9.7,41.5 10.3,36.5 10.9,32.5 11.8,28.5 12.6,25.5 13.7,22.5 15.2,19.5 16.4,17.5 17.9,15.5 19.8,13.5 22.3,11.5 24.5,10 27.4,8.5 30.5,7.2 34.5,5.9 38.5,5Z"/><path fill="#0025fa" d="M43.8,4.5 49.5,4.1 56.5,4.1 62.5,4.5 66.5,5.1 69.5,5.9 72.5,7.3 74.5,8.7 75.5,9.7 76.5,10.9 77.5,12.6 78.6,15.5 79.4,18.5 79.9,22.5 80.5,30.5 81.3,58.5 81.8,64.5 82.3,67.5 82.6,68.5 83.2,69.5 84.5,70.6 85.5,71.1 87.5,71.8 90.5,72.6 94.5,73.4 98.5,74 103.5,74.7 109.5,75.2 121.5,75.9 137.5,76.3 173.5,76.5 344.5,76.5 344.5,379.5 6.4,379.5 6.5,223.5 6.7,180.5 6.9,148.5 7.5,113.5 8.5,75.5 9.3,54.5 10.2,41.5 10.8,36.5 11.4,32.5 12.3,28.5 13.2,25.5 14.3,22.5 15.5,20.1 17.1,17.5 18.6,15.5 20.6,13.5 23,11.5 25.5,9.9 28.5,8.4 31.5,7.2 35.5,6 39.5,5.1Z"/><path fill="#002bfa" d="M46.1,4.5 51.5,4.3 57.5,4.3 62.5,4.7 66.5,5.3 69.5,6.2 72.5,7.6 73.8,8.5 74.9,9.5 76.5,11.5 77.6,13.5 78.7,16.5 79.3,19.5 79.8,23.5 80.3,31.5 81.1,57.5 81.4,62.5 81.9,66.5 82.5,68.5 83.1,69.5 84.5,70.7 87.5,72 90.5,72.8 94.5,73.6 98.5,74.3 103.5,75 109.5,75.5 121.5,76.3 136.5,76.7 172.5,76.9 344.5,76.8 344.5,379.5 6.7,379.5 6.8,223.5 7,180.5 7.3,148.5 7.8,113.5 8.8,75.5 9.7,54.5 10.1,47.5 10.6,41.5 11.2,36.5 12.1,31.5 13.1,27.5 14.1,24.5 15.4,21.5 17,18.5 18.5,16.5 20.3,14.5 22.5,12.5 25.3,10.5 28.5,8.8 31.5,7.5 34.5,6.5 38.5,5.5 42.5,4.9Z"/><path fill="#0032fa" d="M49.5,4.5 55.5,4.4 60.5,4.7 64.5,5.1 67.5,5.8 70.5,6.8 72.5,7.9 74.5,9.5 75.5,10.5 76.5,11.9 77.5,13.9 78.4,16.5 79.1,19.5 79.6,23.5 80.1,31.5 80.9,57.5 81.2,62.5 81.8,66.5 82.4,68.5 83,69.5 83.5,70.1 84.5,70.9 86.5,71.8 90.5,73 94.5,73.9 98.5,74.6 103.5,75.3 108.5,75.8 120.5,76.6 136.5,77 172.5,77.2 344.5,77.2 344.5,379.5 7,379.5 7.1,223.5 7.3,180.5 7.6,147.5 8.2,112.5 9.3,73.5 10.1,53.5 10.6,46.5 11.2,40.5 11.9,35.5 12.6,31.5 13.6,27.5 14.6,24.5 15.9,21.5 17.7,18.5 19.5,16.1 21.5,14 23.5,12.3 26.5,10.3 29.9,8.5 33.5,7.1 36.5,6.2 40.5,5.4 44.5,4.8Z"/><path fill="#0039fa" d="M41,5.5 46.5,4.9 52.5,4.6 59.5,4.8 64.5,5.4 68.5,6.3 71.3,7.5 73.5,8.9 74.5,9.8 75.5,11 77.1,13.5 77.9,15.5 78.7,18.5 79.3,22.5 79.9,30.5 80.8,58.5 81.2,63.5 81.9,67.5 82.2,68.5 82.8,69.5 83.5,70.3 84.5,71.1 87.5,72.4 92.5,73.8 96.5,74.6 100.5,75.2 110.5,76.3 122.5,77 138.5,77.4 173.5,77.6 344.5,77.6 344.5,379.5 7.3,379.5 7.4,228.5 7.6,185.5 7.8,153.5 8.4,120.5 9.3,85.5 10.2,60.5 11.1,45.5 11.6,40.5 12.3,35.5 13.1,31.5 13.9,28.5 14.8,25.5 16,22.5 17.6,19.5 19,17.5 20.7,15.5 22.7,13.5 25.3,11.5 28.5,9.6 31.5,8.2 34.5,7.1 37.5,6.2Z"/><path fill="#003ffa" d="M42.3,5.5 47.5,5 53.5,4.8 59.5,5 64.5,5.6 66.5,6 68.5,6.6 71.5,7.9 73.8,9.5 75.6,11.5 76.8,13.5 78,16.5 78.7,19.5 79.3,23.5 79.8,31.5 80.6,58.5 81,63.5 81.8,67.5 82.1,68.5 82.7,69.5 83.5,70.4 84.5,71.2 87.5,72.6 92.5,74 96.5,74.8 100.5,75.5 110.5,76.6 122.5,77.3 138.5,77.7 173.5,77.9 344.5,77.9 344.5,379.5 7.6,379.5 7.7,228.5 7.9,185.5 8.1,153.5 8.7,120.5 9.6,85.5 10.6,60.5 11.6,45.5 12.1,40.5 12.8,35.5 13.6,31.5 14.4,28.5 15.3,25.5 16.6,22.5 18.2,19.5 19.6,17.5 21.3,15.5 23.5,13.4 26,11.5 29.4,9.5 32.5,8.1 35.5,7 38.5,6.2Z"/><path fill="#0046fa" d="M43.9,5.5 49.5,5.1 55.5,5 61.5,5.3 65.5,6 68.5,6.8 71.5,8.2 73.5,9.6 74.5,10.6 75.5,11.8 77,14.5 77.7,16.5 78.5,19.5 79.1,23.5 79.6,31.5 80.1,50.5 80.5,58.5 80.9,63.5 81.2,65.5 81.6,67.5 82,68.5 82.5,69.5 83.5,70.6 84.5,71.4 85.5,71.9 87.5,72.8 92.5,74.3 96.5,75.1 100.5,75.8 110.5,76.9 122.5,77.7 138.5,78.1 173.5,78.3 344.5,78.3 344.5,379.5 7.9,379.5 8,228.5 8.2,185.5 8.4,153.5 9,120.5 10,85.5 11,60.5 11.4,52.5 12,45.5 12.5,40.5 13.3,35.5 14.1,31.5 14.9,28.5 15.9,25.5 17.2,22.5 18.8,19.5 20.2,17.5 21.9,15.5 24.5,13.1 26.7,11.5 30.1,9.5 33.5,8 36.5,7 40.5,6Z"/><path fill="#004dfa" d="M45.7,5.5 50.5,5.2 56.5,5.2 61.5,5.5 65.5,6.2 68.5,7 71.5,8.5 73.5,10 74.5,11 75.5,12.3 76.7,14.5 77.8,17.5 78.5,20.5 78.9,23.5 79.4,31.5 80,50.5 80.3,58.5 80.7,63.5 81,65.5 81.5,67.5 81.8,68.5 82.5,69.7 83.5,70.8 84.5,71.5 86.5,72.6 88.5,73.3 93.5,74.8 97.5,75.6 101.5,76.2 111.5,77.4 123.5,78.1 138.5,78.5 172.5,78.6 344.5,78.6 344.5,379.5 8.2,379.5 8.3,227.5 8.5,184.5 8.8,152.5 9.4,119.5 10.4,83.5 11.4,59.5 11.9,51.5 12.5,44.5 13.1,39.5 13.9,34.5 14.8,30.5 15.7,27.5 16.8,24.5 18.2,21.5 20.1,18.5 21.7,16.5 23.6,14.5 26,12.5 29,10.5 31.5,9.2 34.5,7.9 38.5,6.7 41.5,6.1Z"/><path fill="#0052fa" d="M48.2,5.5 53.5,5.3 58.5,5.5 62.5,5.9 66.5,6.6 69.5,7.7 71.5,8.7 73.7,10.5 75.4,12.5 76.5,14.5 77.5,17.2 78.3,20.5 78.7,23.5 79.2,31.5 79.8,50.5 80.1,58.5 80.6,63.5 80.9,65.5 81.3,67.5 81.7,68.5 82.5,69.9 83.5,71 84.5,71.7 86.5,72.8 88.5,73.6 93.5,75 97.5,75.9 101.5,76.5 106.5,77.2 111.5,77.7 123.5,78.4 138.5,78.8 172.5,79 344.5,79 344.5,379.5 8.5,379.5 8.6,227.5 8.8,184.5 9.1,152.5 9.7,119.5 10.8,83.5 11.8,59.5 12.3,51.5 12.9,44.5 13.5,39.5 14.2,35.5 15,31.5 16.2,27.5 17.3,24.5 18.8,21.5 20.7,18.5 22.3,16.5 24.5,14.2 27.5,11.9 30.5,10 33.5,8.6 36.5,7.5 40.5,6.5 44.5,5.8Z"/><path fill="#0057f9" d="M41.4,6.5 46.5,5.8 52.5,5.5 58.5,5.7 63.5,6.2 67.5,7.1 70.5,8.4 72.5,9.8 74.5,11.8 75.7,13.5 77,16.5 77.9,19.5 78.5,23.5 79,31.5 79.6,50.5 80,58.5 80.4,63.5 80.7,65.5 81.2,67.5 81.6,68.5 82.5,70.1 83.5,71.2 84.5,71.9 86.5,73 88.5,73.8 93.5,75.3 97.5,76.2 101.5,76.9 106.5,77.5 111.5,78 123.5,78.7 138.5,79.2 172.5,79.4 344.5,79.3 344.5,379.5 8.7,379.5 8.9,230.5 9,188.5 9.3,156.5 9.9,125.5 10.8,94.5 11.9,65.5 12.4,56.5 13,48.5 13.5,43.5 14.1,38.5 14.8,34.5 15.8,30.5 16.7,27.5 17.8,24.5 19.3,21.5 20.5,19.5 22.8,16.5 24.8,14.5 27.2,12.5 29.5,11 32.2,9.5 35.5,8.1 38.5,7.2Z"/><path fill="#005cf8" d="M42.5,6.5 47.5,5.9 53.5,5.7 59.5,5.9 64.5,6.6 67.5,7.4 70.5,8.7 71.8,9.5 73,10.5 74.8,12.5 76,14.5 77.1,17.5 77.9,20.5 78.3,23.5 78.9,31.5 79.4,50.5 79.8,58.5 80.3,63.5 81.1,67.5 81.9,69.5 82.5,70.3 83.5,71.4 84.5,72.1 86.5,73.2 88.5,74 91.5,75 94.5,75.8 98.5,76.7 102.5,77.3 107.5,78 112.5,78.4 124.5,79.1 139.5,79.5 173.5,79.7 344.5,79.7 344.5,379.5 9,379.5 9.2,230.5 9.3,188.5 9.6,156.5 10.2,125.5 11.1,94.5 12.3,65.5 12.8,56.5 13.4,48.5 14.5,39.1 15.1,35.5 16,31.5 17.2,27.5 18.4,24.5 19.9,21.5 21.1,19.5 23.4,16.5 25.4,14.5 27.9,12.5 30.5,10.8 33.5,9.2 36.5,8 39.5,7.1Z"/><path fill="#0060f8" d="M43.8,6.5 48.5,6 54.5,5.9 60.5,6.2 64.5,6.8 67.5,7.6 70.5,9 72.6,10.5 74.5,12.5 75.7,14.5 76.9,17.5 77.7,20.5 78.1,23.5 78.7,31.5 79.3,50.5 79.6,58.5 80.1,63.5 80.9,67.5 81.8,69.5 82.5,70.5 83.5,71.5 84.5,72.3 86.5,73.4 88.5,74.3 91.5,75.3 94.5,76.1 98.5,77 102.5,77.6 107.5,78.3 112.5,78.8 124.5,79.5 139.5,79.9 172.5,80.1 344.5,80 344.5,379.5 9.3,379.5 9.5,230.5 9.6,188.5 10,156.5 10.5,126.5 11.5,95.5 12.7,65.5 13.2,56.5 13.8,48.5 14.3,43.5 15,38.5 15.8,34.5 16.7,30.5 18,26.5 19.3,23.5 21,20.5 22.4,18.5 24,16.5 26.5,14.1 28.5,12.5 31.6,10.5 34.5,9.1 37.5,7.9 40.5,7.1Z"/><path fill="#0065f7" d="M45.3,6.5 50.5,6.1 55.5,6.1 60.5,6.4 64.5,7 67.5,7.8 70.5,9.2 72.5,10.7 73.5,11.7 74.5,12.9 75.9,15.5 76.7,17.5 77.4,20.5 77.9,23.5 78.5,31.5 79.1,51.5 79.5,58.5 80,63.5 80.8,67.5 81.6,69.5 82.3,70.5 83.5,71.7 84.5,72.5 86.5,73.6 88.5,74.5 91.5,75.5 94.5,76.4 98.5,77.3 102.5,77.9 107.5,78.6 112.5,79.1 124.5,79.8 139.5,80.2 172.5,80.4 344.5,80.4 344.5,379.5 9.6,379.5 9.8,229.5 10,187.5 10.3,155.5 10.9,124.5 11.9,92.5 13.2,63.5 13.8,54.5 14.3,47.5 14.9,42.5 15.6,37.5 16.4,33.5 17.2,30.5 18.5,26.5 19.8,23.5 21.5,20.5 22.9,18.5 24.6,16.5 26.6,14.5 29,12.5 32.2,10.5 35.5,8.9 38.5,7.9 41.5,7.1Z"/><path fill="#006af6" d="M47.3,6.5 52.5,6.3 57.5,6.4 61.5,6.7 65.5,7.4 68.5,8.4 70.5,9.5 72.5,11 73.5,12 74.5,13.3 75.7,15.5 76.8,18.5 77.4,21.5 77.8,24.5 78.3,31.5 79.3,57.5 79.8,63.5 80.1,65.5 80.6,67.5 81.5,69.5 82.1,70.5 83.5,71.9 84.5,72.7 86.5,73.8 89.5,75.1 92.5,76.1 95.5,76.9 99.5,77.7 103.5,78.4 108.5,79.1 113.5,79.5 124.5,80.2 139.5,80.6 172.5,80.8 344.5,80.7 344.5,379.5 9.9,379.5 10,229.5 10.2,187.5 10.6,155.5 11.2,124.5 12.3,92.5 13.6,63.5 14.2,54.5 14.8,47.5 15.3,42.5 16.1,37.5 16.9,33.5 18,29.5 19.4,25.5 20.9,22.5 22.7,19.5 24.2,17.5 26.1,15.5 28.5,13.3 31.1,11.5 34.5,9.6 37.5,8.4 40.5,7.5 43.5,6.9Z"/><path fill="#006ef6" d="M50.3,6.5 55.5,6.5 59.5,6.7 63.5,7.2 66.5,7.9 69.5,9.1 71.5,10.4 73.5,12.4 74.5,13.7 75.5,15.6 76.6,18.5 77.2,21.5 77.7,24.5 78.2,31.5 79.1,57.5 79.6,63.5 80,65.5 80.5,67.5 81.3,69.5 81.9,70.5 83.5,72.2 84.5,72.9 86.5,74.1 89.5,75.4 92.5,76.4 95.5,77.2 99.5,78.1 103.5,78.7 108.5,79.4 113.5,79.9 124.5,80.5 139.5,80.9 172.5,81.1 344.5,81.1 344.5,379.5 10.2,379.5 10.3,228.5 10.6,186.5 10.9,154.5 11.6,123.5 12.7,90.5 14,62.5 14.6,53.5 15.3,46.5 15.9,41.5 16.7,36.5 17.6,32.5 18.8,28.5 19.9,25.5 21.4,22.5 23.2,19.5 24.7,17.5 26.6,15.5 29.5,13 32.5,11 35.5,9.5 38.5,8.3 42.5,7.3 46.5,6.8Z"/><path fill="#0073f5" d="M42.6,7.5 47.5,6.8 52.5,6.6 57.5,6.7 62.5,7.2 65.5,7.8 68.5,8.9 69.7,9.5 71.2,10.5 72.4,11.5 73.5,12.7 74.7,14.5 76.1,17.5 76.9,20.5 77.3,23.5 78,31.5 78.6,51.5 79,58.5 79.5,63.5 79.8,65.5 80.3,67.5 81.1,69.5 81.8,70.5 82.6,71.5 84.5,73.1 86.5,74.3 89.5,75.6 92.5,76.6 95.5,77.5 99.5,78.4 103.5,79.1 112.5,80.1 124.5,80.9 139.5,81.3 172.5,81.5 344.5,81.4 344.5,379.5 10.5,379.5 10.6,232.5 10.8,190.5 11.2,158.5 11.7,129.5 12.6,101.5 14,69.5 15.2,51.5 15.8,45.5 16.5,40.5 17.2,36.5 18.1,32.5 18.9,29.5 20,26.5 21.3,23.5 23.1,20.5 25.3,17.5 27.1,15.5 29.4,13.5 31.5,12 34,10.5 36.5,9.3 39.5,8.3Z"/><path fill="#0079f6" d="M43.7,7.5 48.5,7 53.5,6.8 59.5,7 63.5,7.6 66.5,8.3 69.5,9.6 70.9,10.5 72.1,11.5 73.8,13.5 75,15.5 76.2,18.5 76.9,21.5 77.3,24.5 77.8,32.5 78.8,57.5 79.3,63.5 80.2,67.5 81,69.5 81.6,70.5 82.5,71.6 84.5,73.3 86.5,74.5 89.5,75.9 92.5,76.9 96.5,78 100.5,78.9 104.5,79.5 109.5,80.2 114.5,80.6 125.5,81.3 140.5,81.7 172.5,81.8 344.5,81.8 344.5,379.5 10.8,379.5 10.9,232.5 11.1,190.5 11.5,158.5 12,130.5 13,102.5 14.4,70.5 15,59.5 15.6,51.5 16.2,45.5 16.9,40.5 17.6,36.5 18.5,32.5 19.7,28.5 20.9,25.5 22.4,22.5 23.6,20.5 25.8,17.5 27.6,15.5 29.9,13.5 32.5,11.7 34.5,10.5 37.5,9.2 40.5,8.2Z"/><path fill="#007ff6" d="M45,7.5 49.5,7.1 54.5,7 59.5,7.2 63.5,7.8 66.5,8.5 69.5,9.9 71.8,11.5 73.6,13.5 74.8,15.5 76,18.5 76.7,21.5 77.1,24.5 77.7,32.5 78.6,57.5 79.2,63.5 80,67.5 80.8,69.5 81.5,70.6 82.5,71.9 84.5,73.5 86.5,74.8 89.5,76.1 92.5,77.2 96.5,78.3 100.5,79.2 104.5,79.9 113.5,80.9 125.5,81.6 140.5,82 172.5,82.2 344.5,82.1 344.5,379.5 11.1,379.5 11.2,232.5 11.4,190.5 11.8,158.5 12.4,130.5 13.3,102.5 14.8,70.5 15.4,59.5 16,51.5 16.7,45.5 17.3,40.5 18,36.5 19,32.5 19.8,29.5 20.9,26.5 22.3,23.5 24,20.5 26.3,17.5 28.1,15.5 30.4,13.5 33.3,11.5 35.5,10.3 38.5,9 41.5,8.1Z"/><path fill="#0085f7" d="M46.5,7.5 51.5,7.2 56.5,7.2 60.5,7.5 64.5,8.2 67.5,9.1 69.5,10.1 71.5,11.5 72.5,12.5 73.5,13.8 74.6,15.5 75.8,18.5 76.5,21.5 76.9,24.5 77.4,31.5 78.1,51.5 78.5,58.5 79.2,64.5 79.6,66.5 80.2,68.5 81.2,70.5 82.5,72.1 83.5,73 85.5,74.4 87.5,75.5 90.5,76.8 93.5,77.8 96.5,78.6 100.5,79.5 104.5,80.2 113.5,81.2 125.5,82 140.5,82.4 172.5,82.5 344.5,82.5 344.5,379.5 11.4,379.5 11.5,232.5 11.7,190.5 12.1,158.5 12.7,129.5 13.7,101.5 15.2,69.5 15.9,58.5 16.5,50.5 17.2,44.5 17.9,39.5 18.7,35.5 19.7,31.5 21,27.5 22.3,24.5 23.9,21.5 25.2,19.5 27.7,16.5 29.7,14.5 32.3,12.5 34.5,11.1 37.5,9.7 40.5,8.6 43.5,7.9Z"/><path fill="#008bf8" d="M48.6,7.5 53.5,7.3 58.5,7.5 62.5,8 65.5,8.6 68.5,9.8 70.5,11 72.2,12.5 73.5,14.1 74.8,16.5 75.5,18.5 76.3,21.5 76.7,24.5 77.3,31.5 77.9,51.5 78.3,58.5 79,64.5 79.4,66.5 80,68.5 81.1,70.5 82.5,72.3 83.5,73.2 85.5,74.7 87.5,75.8 90.5,77.1 93.5,78.1 96.5,78.9 100.5,79.8 104.5,80.5 113.5,81.6 125.5,82.3 140.5,82.7 172.5,82.9 344.5,82.8 344.5,379.5 11.7,379.5 11.8,231.5 12,189.5 12.4,157.5 13.1,128.5 14.1,99.5 15.7,67.5 16.4,57.5 17,49.5 17.8,43.5 18.5,38.5 19.4,34.5 20.4,30.5 21.9,26.5 23.2,23.5 25,20.5 26.4,18.5 29.1,15.5 31.4,13.5 33.5,12 36.2,10.5 38.5,9.5 41.5,8.6 44.5,7.9Z"/><path fill="#0091f8" d="M42.6,8.5 47.5,7.8 52.5,7.5 57.5,7.6 62.5,8.1 65.5,8.8 68.5,10 70.8,11.5 72.8,13.5 74.1,15.5 75,17.5 75.9,20.5 76.4,23.5 76.8,27.5 77.1,31.5 77.8,51.5 78.2,58.5 78.8,64.5 79.3,66.5 79.9,68.5 80.9,70.5 82.4,72.5 83.5,73.5 85.5,74.9 87.5,76 90.5,77.3 93.5,78.4 96.5,79.2 100.5,80.1 104.5,80.8 113.5,81.9 125.5,82.7 140.5,83.1 172.5,83.2 344.5,83.2 344.5,379.5 11.9,379.5 12.1,234.5 12.3,192.5 12.7,160.5 13.2,133.5 14.1,107.5 15.7,74.5 17,54.5 18.2,43.5 18.8,39.5 19.6,35.5 20.6,31.5 21.6,28.5 22.7,25.5 24.2,22.5 26.2,19.5 27.7,17.5 29.6,15.5 31.9,13.5 34.5,11.7 36.7,10.5 39.5,9.4Z"/><path fill="#0097f9" d="M43.5,8.5 47.5,7.9 52.5,7.7 57.5,7.8 62.5,8.3 65.5,9 68.5,10.2 70.5,11.5 71.6,12.5 72.5,13.5 73.9,15.5 74.8,17.5 75.7,20.5 76.2,23.5 76.7,27.5 76.9,31.5 77.6,51.5 78,58.5 78.7,64.5 79.1,66.5 79.7,68.5 80.7,70.5 82.2,72.5 83.5,73.7 85.5,75.1 87.5,76.3 90.5,77.6 93.5,78.7 97.5,79.8 101.5,80.6 105.5,81.3 114.5,82.3 125.5,83 140.5,83.4 171.5,83.6 344.5,83.5 344.5,379.5 12.2,379.5 12.4,234.5 12.6,192.5 13,160.5 13.6,133.5 14.5,107.5 16.1,74.5 17.4,54.5 18.6,43.5 19.2,39.5 20,35.5 21,31.5 22,28.5 23.2,25.5 24.7,22.5 26.6,19.5 28.2,17.5 30,15.5 32.4,13.5 35.3,11.5 37.5,10.4 40.5,9.2Z"/><path fill="#009dfa" d="M44.6,8.5 49.5,8 54.5,7.9 59.5,8.1 63.5,8.7 66.5,9.6 68.5,10.4 70.5,11.7 71.5,12.6 72.5,13.8 73.7,15.5 75,18.5 75.7,21.5 76.2,24.5 76.7,31.5 77.4,51.5 77.8,58.5 78.5,64.5 78.9,66.5 79.6,68.5 80.5,70.5 81.5,71.9 83.5,74 85.5,75.4 87.5,76.5 90.5,77.9 93.5,79 97.5,80.1 101.5,81 105.5,81.7 114.5,82.7 125.5,83.4 140.5,83.8 171.5,84 344.5,83.9 344.5,379.5 12.5,379.5 12.7,234.5 12.9,192.5 13.3,160.5 13.9,133.5 14.8,107.5 16.4,74.5 17.8,54.5 19,43.5 19.6,39.5 20.4,35.5 21.5,31.5 22.4,28.5 23.7,25.5 25.2,22.5 27.1,19.5 28.6,17.5 30.5,15.5 33.5,13 35.8,11.5 38.5,10.2 41.5,9.2Z"/><path fill="#00a4fa" d="M45.9,8.5 50.5,8.1 55.5,8.1 59.5,8.3 63.5,8.9 66.5,9.7 68.2,10.5 69.5,11.3 71.5,12.9 72.8,14.5 74,16.5 74.8,18.5 75.5,21.5 76,24.5 76.5,31.5 77.3,51.5 77.7,58.5 78.4,64.5 78.8,66.5 79.4,68.5 80.3,70.5 81.5,72.2 83.5,74.2 85.5,75.6 87.5,76.8 90.5,78.2 93.5,79.3 97.5,80.4 101.5,81.3 105.5,82 114.5,83 125.5,83.7 140.5,84.1 171.5,84.3 344.5,84.2 344.5,379.5 12.8,379.5 13,234.5 13.2,192.5 13.6,160.5 14.2,133.5 15.2,107.5 16.8,74.5 18.2,54.5 19.4,43.5 20.3,38.5 21.1,34.5 22.2,30.5 23.3,27.5 24.6,24.5 26.2,21.5 28.3,18.5 30,16.5 32,14.5 34.7,12.5 37.5,10.9 39.5,10 42.5,9.1Z"/><path fill="#00abfa" d="M47.4,8.5 51.5,8.3 56.5,8.3 60.5,8.6 64.5,9.3 67.5,10.4 69.5,11.5 71.5,13.2 72.6,14.5 73.8,16.5 74.6,18.5 75.3,21.5 75.8,24.5 76.4,31.5 77.1,51.5 77.5,58.5 78.2,64.5 78.6,66.5 79.2,68.5 80.1,70.5 81.5,72.5 83.5,74.4 85.5,75.9 87.5,77.1 90.5,78.5 93.5,79.6 97.5,80.7 101.5,81.6 105.5,82.3 114.5,83.4 125.5,84.1 140.5,84.5 171.5,84.7 344.5,84.6 344.5,379.5 13.1,379.5 13.3,234.5 13.5,192.5 13.9,160.5 14.5,133.5 15.5,107.5 17.2,74.5 18,62.5 18.7,53.5 20,42.5 20.9,37.5 21.8,33.5 23,29.5 24.1,26.5 25.5,23.5 27.3,20.5 29.5,17.5 31.4,15.5 33.7,13.5 36.5,11.7 38.9,10.5 41.5,9.6 44.5,8.9Z"/><path fill="#00b2fa" d="M49.8,8.5 54.5,8.4 58.5,8.6 61.5,8.9 64.5,9.5 66.5,10.1 69.2,11.5 70.5,12.5 71.5,13.5 72.5,14.7 73.5,16.5 74.4,18.5 75.2,21.5 75.6,24.5 76.2,31.5 76.9,51.5 77.3,58.5 78,64.5 78.5,66.5 79.1,68.5 80,70.5 81.5,72.7 83.5,74.7 85.5,76.2 87.5,77.3 90.5,78.8 93.5,79.9 97.5,81.1 101.5,82 105.5,82.7 114.5,83.7 125.5,84.4 140.5,84.8 171.5,85 344.5,84.9 344.5,379.5 13.4,379.5 13.6,233.5 13.8,191.5 14.2,159.5 14.9,132.5 15.9,105.5 17.7,72.5 18.4,61.5 19.2,52.5 19.9,46.5 20.6,41.5 21.5,36.5 22.5,32.5 23.7,28.5 25,25.5 26.5,22.5 28.4,19.5 30.8,16.5 32.9,14.5 35.5,12.5 37.5,11.4 39.5,10.5 42.5,9.5 45.5,8.9Z"/><path fill="#00bafa" d="M43.3,9.5 47.5,8.8 52.5,8.6 57.5,8.7 62.5,9.2 65.5,10 67.5,10.8 68.5,11.3 70.5,12.7 72.1,14.5 73.3,16.5 74.2,18.5 75,21.5 75.4,24.5 76,31.5 76.7,51.5 77.2,58.5 77.9,64.5 78.3,66.5 78.9,68.5 79.8,70.5 81.1,72.5 82.5,74.1 84.5,75.8 87.5,77.6 90.5,79 93.5,80.2 97.5,81.4 101.5,82.3 105.5,83 114.5,84.1 125.5,84.8 140.5,85.2 171.5,85.4 344.5,85.3 344.5,379.5 13.7,379.5 13.8,236.5 14.1,195.5 14.5,163.5 15,137.5 15.9,113.5 17.5,82.5 19,59.5 20.1,47.5 21.5,38.5 22.4,34.5 23.5,30.5 24.6,27.5 25.9,24.5 27.5,21.5 28.8,19.5 31.2,16.5 33.3,14.5 35.5,12.8 37.7,11.5 40.5,10.3Z"/><path fill="#00c1fa" d="M44.2,9.5 48.5,8.9 53.5,8.7 58.5,8.9 62.5,9.4 65.5,10.2 67.5,11 69.9,12.5 71,13.5 71.9,14.5 73.1,16.5 74,18.5 74.8,21.5 75.3,24.5 75.8,31.5 76.6,51.5 77.1,59.5 77.4,62.5 77.9,65.5 78.4,67.5 79.1,69.5 80.2,71.5 81.5,73.3 83.5,75.2 85.5,76.7 88.5,78.4 91.5,79.8 94.5,80.8 98.5,82 102.5,82.8 106.5,83.5 115.5,84.5 126.5,85.2 141.5,85.6 171.5,85.7 344.5,85.6 344.5,379.5 14,379.5 14.1,236.5 14.4,195.5 14.8,163.5 15.4,137.5 16.3,112.5 17.9,81.5 19.5,58.5 20.7,46.5 21.4,41.5 22.1,37.5 23.1,33.5 24.2,29.5 25.4,26.5 26.8,23.5 28.5,20.5 29.9,18.5 32.6,15.5 34.5,13.9 36.5,12.4 39.5,10.9 41.5,10.2Z"/><path fill="#00c8fa" d="M45.2,9.5 49.5,9 53.5,8.9 58.5,9.1 62.5,9.6 65.5,10.3 67.5,11.2 69.7,12.5 70.8,13.5 71.7,14.5 72.9,16.5 73.8,18.5 74.6,21.5 75.1,24.5 75.7,31.5 76.4,51.5 76.9,59.5 77.2,62.5 77.7,65.5 78.2,67.5 78.9,69.5 80,71.5 81.5,73.6 83.5,75.5 85.5,77 88.5,78.7 91.5,80.1 94.5,81.1 98.5,82.3 102.5,83.2 106.5,83.8 115.5,84.9 126.5,85.5 141.5,85.9 171.5,86.1 344.5,86 344.5,379.5 14.3,379.5 14.4,236.5 14.7,195.5 15.1,163.5 15.7,137.5 16.6,113.5 18.2,82.5 19.9,58.5 21.1,46.5 21.8,41.5 22.6,37.5 23.5,33.5 24.7,29.5 25.8,26.5 27.2,23.5 28.9,20.5 31.1,17.5 33,15.5 35.4,13.5 37.5,12.1 39.5,11.1 42.5,10.1Z"/><path fill="#00d0fa" d="M46.5,9.5 50.5,9.2 55.5,9.1 59.5,9.4 63.5,10 66.5,10.9 68.5,11.9 70.5,13.5 72.2,15.5 73.2,17.5 73.9,19.5 74.4,21.5 74.9,24.5 75.5,31.5 76.2,51.5 76.7,59.5 77.1,62.5 77.6,65.5 78.1,67.5 78.8,69.5 79.8,71.5 81.5,73.9 83.5,75.8 85.5,77.3 88.5,79 91.5,80.4 94.5,81.5 98.5,82.6 102.5,83.5 106.5,84.2 115.5,85.2 126.5,85.9 141.5,86.3 170.5,86.4 344.5,86.3 344.5,379.5 14.6,379.5 14.7,235.5 15,194.5 15.4,162.5 16,136.5 17,112.5 18.7,80.5 20.3,57.5 21.6,45.5 22.4,40.5 23.2,36.5 24.2,32.5 25.4,28.5 26.6,25.5 28.1,22.5 30,19.5 31.5,17.5 33.4,15.5 35.8,13.5 38.5,11.8 40.5,10.9 43.5,10Z"/><path fill="#00d7fa" d="M48.1,9.5 52.5,9.3 56.5,9.3 60.5,9.7 63.5,10.2 66.5,11.1 68.5,12.1 70.5,13.7 72,15.5 73,17.5 73.7,19.5 74.2,21.5 74.7,24.5 75.3,31.5 76.1,51.5 76.6,59.5 76.9,62.5 77.4,65.5 77.9,67.5 78.6,69.5 79.6,71.5 80.5,72.9 81.5,74.2 83.5,76.1 85.5,77.6 88.5,79.3 91.5,80.7 94.5,81.8 98.5,82.9 102.5,83.8 106.5,84.5 115.5,85.6 126.5,86.2 141.5,86.6 170.5,86.8 344.5,86.7 344.5,379.5 14.8,379.5 15,235.5 15.3,194.5 15.7,162.5 16.3,136.5 17.4,111.5 19.2,79.5 20.8,56.5 22.2,44.5 23,39.5 23.8,35.5 24.9,31.5 26.2,27.5 27.5,24.5 29.1,21.5 31.1,18.5 32.8,16.5 34.9,14.5 37.5,12.6 39.6,11.5 42.5,10.4 45.5,9.8Z"/><path fill="#00daf5" d="M50.9,9.5 54.5,9.5 58.5,9.6 61.5,10 64.5,10.6 66.5,11.3 68.5,12.3 70.5,13.9 71.8,15.5 72.8,17.5 73.6,19.5 74.1,21.5 74.6,24.5 75.1,31.5 75.8,50.5 76.3,58.5 77,64.5 77.7,67.5 78.4,69.5 79.4,71.5 80.7,73.5 82.5,75.5 84.5,77.1 87.5,79.1 90.5,80.6 93.5,81.8 97.5,83 101.5,84 105.5,84.7 114.5,85.8 125.5,86.5 140.5,87 170.5,87.1 344.5,87 344.5,379.5 15.1,379.5 15.3,234.5 15.6,193.5 16,161.5 16.7,134.5 17.8,109.5 19.7,76.5 20.6,63.5 21.4,54.5 22.1,48.5 22.9,42.5 23.8,37.5 24.7,33.5 25.9,29.5 27,26.5 28.4,23.5 30.1,20.5 32.3,17.5 34.1,15.5 36.5,13.5 38.5,12.3 40.5,11.3 43.5,10.4 46.5,9.8Z"/><path fill="#00def1" d="M43.8,10.5 47.5,9.9 52.5,9.6 57.5,9.7 62.5,10.3 65.5,11.1 67.5,11.9 68.5,12.5 69.8,13.5 71.5,15.4 72.6,17.5 73.4,19.5 73.9,21.5 74.4,24.5 75,31.5 75.7,50.5 76.1,58.5 76.9,64.5 77.5,67.5 78.2,69.5 79.5,72.1 81.3,74.5 83.5,76.6 85.5,78.1 88.5,79.9 91.5,81.3 94.5,82.4 98.5,83.6 102.5,84.5 106.5,85.2 115.5,86.3 126.5,86.9 140.5,87.3 169.5,87.5 344.5,87.4 344.5,379.5 15.4,379.5 15.6,239.5 15.8,198.5 16.2,166.5 16.8,141.5 17.7,118.5 19.1,91.5 21,64.5 22.2,50.5 23.6,40.5 24.4,36.5 25.4,32.5 26.7,28.5 27.8,25.5 29.3,22.5 31.2,19.5 32.7,17.5 34.5,15.5 36.5,13.8 38.5,12.5 41.5,11.1Z"/><path fill="#00e1ec" d="M44.6,10.5 48.5,10 53.5,9.8 58.5,10 62.5,10.5 65.5,11.2 67.5,12.1 69.5,13.5 70.6,14.5 71.3,15.5 72.5,17.5 73.2,19.5 73.7,21.5 74.2,24.5 74.8,31.5 75.5,50.5 76,58.5 76.7,64.5 77.4,67.5 78,69.5 79.5,72.4 81,74.5 83.5,76.9 85.5,78.4 88.5,80.2 91.5,81.6 94.5,82.8 98.5,84 102.5,84.9 106.5,85.6 115.5,86.6 126.5,87.3 140.5,87.7 169.5,87.8 344.5,87.7 344.5,379.5 15.7,379.5 15.9,239.5 16.1,198.5 16.5,166.5 17.1,141.5 18,118.5 19.5,91.5 21.3,64.5 22.6,50.5 24,40.5 24.8,36.5 25.8,32.5 27.1,28.5 28.2,25.5 29.7,22.5 30.9,20.5 33,17.5 34.9,15.5 37.3,13.5 39.5,12.2 41.5,11.3Z"/><path fill="#00e4e7" d="M45.6,10.5 49.5,10.1 54.5,10 58.5,10.1 62.5,10.6 65.5,11.4 67.5,12.3 69.5,13.7 71.1,15.5 72.3,17.5 73,19.5 73.5,21.5 74,24.5 74.6,31.5 75.3,50.5 75.8,58.5 76.5,64.5 77.2,67.5 77.8,69.5 78.8,71.5 80.5,74.2 82.5,76.4 84.5,78 87.5,80 90.5,81.5 94.5,83.1 98.5,84.3 102.5,85.2 106.5,85.9 115.5,87 126.5,87.7 140.5,88 169.5,88.2 344.5,88.1 344.5,379.5 16,379.5 16.2,238.5 16.4,197.5 16.9,165.5 17.5,140.5 18.4,117.5 19.9,90.5 21.8,63.5 23.2,49.5 23.8,44.5 24.6,39.5 25.5,35.5 26.5,31.5 27.8,27.5 29.1,24.5 30.6,21.5 32.6,18.5 34.2,16.5 36.3,14.5 38.5,12.9 40.5,11.9 42.5,11.2Z"/><path fill="#00e8e3" d="M46.9,10.5 50.5,10.2 55.5,10.2 59.5,10.4 63.5,11 65.5,11.6 67.5,12.5 69.5,13.9 71,15.5 72.1,17.5 72.8,19.5 73.4,21.5 73.8,24.5 74.4,31.5 75.2,50.5 75.6,58.5 76.4,64.5 77,67.5 77.7,69.5 79.1,72.5 80.5,74.5 82.5,76.7 84.5,78.4 87.5,80.3 90.5,81.9 94.5,83.4 98.5,84.6 102.5,85.6 106.5,86.3 115.5,87.3 126.5,88 140.5,88.4 169.5,88.6 344.5,88.4 344.5,379.5 16.3,379.5 16.5,238.5 16.7,197.5 17.2,165.5 17.8,139.5 18.8,116.5 20.4,88.5 22.3,62.5 23.7,48.5 24.4,43.5 25.2,38.5 26.1,34.5 27.2,30.5 28.6,26.5 29.9,23.5 31.6,20.5 33.7,17.5 35.5,15.5 37.5,13.9 39.5,12.6 41.5,11.7 43.5,11.1Z"/><path fill="#00ebde" d="M48.6,10.5 52.5,10.3 56.5,10.4 60.5,10.7 63.5,11.2 65.5,11.8 67.5,12.7 69.5,14.1 70.8,15.5 71.9,17.5 72.7,19.5 73.2,21.5 73.7,24.5 74.2,31.5 75,50.5 75.5,58.5 76.2,64.5 76.8,67.5 77.5,69.6 78.9,72.5 80.2,74.5 82.5,77 84.5,78.7 87.5,80.6 90.5,82.2 94.5,83.8 98.5,85 102.5,85.9 106.5,86.6 115.5,87.7 126.5,88.4 140.5,88.7 169.5,88.9 344.5,88.8 344.5,379.5 16.6,379.5 16.8,237.5 17,196.5 17.5,164.5 18.1,139.5 19.1,116.5 20.8,88.5 22.8,61.5 24.2,47.5 24.9,42.5 25.8,37.5 26.7,33.5 27.9,29.5 29.4,25.5 30.8,22.5 32.6,19.5 34,17.5 35.9,15.5 38.4,13.5 40.5,12.3 42.5,11.6 45.5,10.9Z"/><path fill="#00eed9" d="M52.1,10.5 55.5,10.5 59.5,10.7 62.5,11.2 65.5,11.9 67.5,12.8 68.5,13.5 69.7,14.5 71.2,16.5 72.2,18.5 72.8,20.5 73.2,22.5 73.6,25.5 74.1,31.5 74.9,51.5 75.4,59.5 76.2,65.5 76.7,67.5 77.5,70 78.7,72.5 80.5,75.2 82.5,77.3 84.5,79 87.5,81 90.5,82.5 94.5,84.1 98.5,85.3 102.5,86.3 106.5,87 115.5,88 126.5,88.7 140.5,89.1 168.5,89.3 344.5,89.2 344.5,379.5 16.9,379.5 17.1,235.5 17.4,194.5 17.8,162.5 18.5,137.5 19.6,113.5 21.6,82.5 23.5,57.5 24.2,50.5 25,44.5 25.8,39.5 26.9,34.5 28,30.5 29.4,26.5 30.7,23.5 32.3,20.5 34.4,17.5 36.2,15.5 38.5,13.6 40.5,12.5 42.5,11.7 45.5,11 48.5,10.7Z"/><path fill="#00f0d3" d="M44,11.5 47.5,10.9 52.5,10.7 57.5,10.8 61.5,11.2 64.5,11.8 66.5,12.5 68.5,13.7 69.5,14.5 70.4,15.5 71.6,17.5 72.3,19.5 72.8,21.5 73.3,24.5 73.9,31.5 74.7,51.5 75.2,59.5 76,65.5 76.8,68.5 77.5,70.5 79,73.5 80.5,75.5 82.5,77.6 85.5,80 88.5,81.9 91.5,83.3 94.5,84.5 98.5,85.7 102.5,86.6 106.5,87.3 115.5,88.4 126.5,89.1 140.5,89.5 168.5,89.6 344.5,89.5 344.5,379.5 17.2,379.5 17.3,244.5 17.6,203.5 18,172.5 18.5,147.5 19.3,125.5 20.5,103.5 22.3,77.5 23.8,58.5 25.1,46.5 26.6,37.5 27.5,33.5 28.7,29.5 30.1,25.5 32.1,21.5 33.9,18.5 35.5,16.5 37.6,14.5 39.5,13.2 41.5,12.3Z"/><path fill="#00f0cc" d="M44.9,11.5 48.5,11 52.5,10.8 57.5,10.9 61.5,11.3 64.5,12 66.5,12.7 68.5,13.8 70.2,15.5 71.4,17.5 72.2,19.5 72.7,21.5 73.2,24.5 73.7,31.5 74.5,51.5 75,59.5 75.8,65.5 76.6,68.5 77.3,70.5 78.5,73 80.2,75.5 82.5,78 84.5,79.6 87.5,81.6 90.5,83.2 94.5,84.8 98.5,86 102.5,87 106.5,87.7 115.5,88.7 126.5,89.4 140.5,89.8 168.5,90 344.5,89.9 344.5,379.5 17.5,379.5 17.6,244.5 17.9,203.5 18.3,172.5 18.8,147.5 19.7,125.5 20.9,103.5 22.7,77.5 24.2,58.5 25.7,45.5 26.5,40.5 27.2,36.5 28.2,32.5 29.4,28.5 30.9,24.5 32.4,21.5 34.3,18.5 35.9,16.5 38,14.5 39.5,13.4 40.5,12.9 42.5,12.1Z"/><path fill="#00f0c5" d="M45.8,11.5 49.5,11.1 54.5,11 58.5,11.2 62.5,11.7 65.5,12.4 67.5,13.4 69,14.5 70.5,16.2 71.2,17.5 72,19.5 72.5,21.5 73,24.5 73.5,31.5 74.3,51.5 74.9,59.5 75.7,65.5 76.4,68.5 77.1,70.5 78.5,73.4 79.9,75.5 82.5,78.3 84.5,80 87.5,82 90.5,83.5 94.5,85.2 98.5,86.4 102.5,87.3 106.5,88 115.5,89.1 126.5,89.8 140.5,90.2 168.5,90.3 344.5,90.2 344.5,379.5 17.7,379.5 17.9,243.5 18.2,202.5 18.6,171.5 19.2,146.5 20,124.5 21.3,102.5 23.2,75.5 24.8,56.5 26.2,44.5 27,39.5 27.8,35.5 28.8,31.5 30.1,27.5 31.7,23.5 33.3,20.5 35.3,17.5 37.1,15.5 38.5,14.3 40.5,13.1 42.5,12.3Z"/><path fill="#00f0bd" d="M47.1,11.5 50.5,11.2 55.5,11.2 59.5,11.4 63.5,12 65.5,12.6 67.5,13.5 68.5,14.2 69.5,15.2 70.5,16.5 71.1,17.5 71.8,19.5 72.3,21.5 72.8,24.5 73.4,31.5 74.2,51.5 74.7,59.5 75.5,65.5 76.2,68.5 76.9,70.5 78.3,73.5 79.7,75.5 81.5,77.7 84.5,80.3 87.5,82.3 90.5,83.9 94.5,85.5 98.5,86.7 102.5,87.7 106.5,88.4 115.5,89.5 126.5,90.2 140.5,90.5 168.5,90.7 344.5,90.6 344.5,379.5 18,379.5 18.2,242.5 18.5,201.5 18.9,170.5 19.5,145.5 20.4,123.5 21.8,100.5 23.7,73.5 25.3,55.5 26.8,43.5 27.6,38.5 28.5,34.5 29.5,30.5 30.8,26.5 32.1,23.5 33.6,20.5 35.6,17.5 37.4,15.5 39.5,13.9 41.5,12.8 44.5,11.9Z"/><path fill="#00f0b6" d="M48.8,11.5 52.5,11.3 56.5,11.4 60.5,11.7 63.5,12.2 65.5,12.8 67.5,13.7 68.5,14.4 69.5,15.4 70.3,16.5 70.9,17.5 71.7,19.5 72.2,21.5 72.6,24.5 73.2,31.5 74,51.5 74.5,59.5 75.3,65.5 76,68.5 76.7,70.5 78.1,73.5 79.5,75.6 81.5,78 84.5,80.7 87.5,82.7 90.5,84.2 94.5,85.9 98.5,87.1 102.5,88 106.5,88.8 115.5,89.8 126.5,90.5 140.5,90.9 167.5,91 344.5,90.9 344.5,379.5 18.3,379.5 18.5,240.5 18.8,199.5 19.2,168.5 19.9,143.5 20.8,121.5 22.3,97.5 24.4,69.5 26,52.5 26.7,46.5 27.6,40.5 28.6,35.5 29.6,31.5 30.8,27.5 32,24.5 33.4,21.5 35.2,18.5 36.7,16.5 38.9,14.5 40.5,13.5 42.5,12.6 45.5,11.9Z"/><path fill="#00f0af" d="M43.4,12.5 46.5,11.9 51.5,11.5 56.5,11.6 61.5,12 64.5,12.6 66.5,13.3 67.5,13.9 68.5,14.6 69.4,15.5 70.2,16.5 70.7,17.5 71.5,19.5 72,21.5 72.5,24.5 73,31.5 73.8,51.5 74.3,59.5 75.1,65.5 75.8,68.5 76.5,70.5 77.9,73.5 79.5,76 81.5,78.4 84.5,81 87.5,83 90.5,84.6 94.5,86.2 98.5,87.5 102.5,88.4 106.5,89.1 115.5,90.2 126.5,90.9 140.5,91.2 167.5,91.4 344.5,91.3 344.5,379.5 18.6,379.5 18.8,255.5 18.9,216.5 19.2,186.5 19.7,161.5 20.3,140.5 21.2,121.5 22.4,101.5 24.3,75.5 26,56.5 27.6,43.5 28.4,38.5 29.2,34.5 30.5,29.5 31.9,25.5 33.2,22.5 34.8,19.5 37,16.5 38.5,15.1 40.5,13.7 41.5,13.2Z"/><path fill="#00f0a7" d="M44.1,12.5 47.5,11.9 52.5,11.7 57.5,11.8 61.5,12.1 64.5,12.8 66.5,13.5 67.5,14 68.5,14.8 70,16.5 70.6,17.5 71.3,19.5 71.8,21.5 72.3,24.5 72.8,31.5 73.7,51.5 74.2,59.5 74.6,63.5 75.2,66.5 75.6,68.5 76.5,71 77.6,73.5 79.5,76.4 81.5,78.7 84.5,81.4 87.5,83.4 90.5,85 94.5,86.6 98.5,87.8 102.5,88.8 106.5,89.5 115.5,90.5 126.5,91.2 140.5,91.6 167.5,91.7 344.5,91.6 344.5,379.5 18.9,379.5 19,255.5 19.2,216.5 19.5,186.5 20,161.5 20.6,140.5 21.5,121.5 22.7,101.5 24.8,74.5 26.5,55.5 27.3,48.5 28.1,42.5 29,37.5 29.8,33.5 30.9,29.5 32.3,25.5 34,21.5 35.8,18.5 37.3,16.5 38.3,15.5 39.5,14.5 41.5,13.3Z"/><path fill="#00f0a0" d="M44.9,12.5 48.5,12 52.5,11.8 57.5,11.9 61.5,12.3 64.5,12.9 66.5,13.6 67.5,14.2 68.5,14.9 69.8,16.5 70.4,17.5 71.2,19.5 71.7,21.5 72.1,24.5 72.7,31.5 73.5,51.5 74,59.5 74.4,63.5 75,66.5 75.8,69.5 76.5,71.5 78,74.5 79.5,76.8 81.5,79.1 84.5,81.7 87.5,83.7 90.5,85.3 94.5,87 98.5,88.2 102.5,89.1 106.5,89.8 115.5,90.9 126.5,91.6 140.5,92 167.5,92.1 344.5,92 344.5,379.5 19.2,379.5 19.3,255.5 19.5,216.5 19.8,186.5 20.3,161.5 20.9,140.5 21.8,121.5 23.1,101.5 25.2,73.5 27,54.5 27.8,47.5 28.7,41.5 29.6,36.5 30.5,32.5 31.9,27.5 33.4,23.5 34.8,20.5 36.7,17.5 38.5,15.5 40.5,14 42.5,13.1Z"/><path fill="#0ff18b" d="M45.8,12.5 49.5,12.1 54.5,12 58.5,12.2 62.5,12.6 64.5,13.1 66.5,13.8 67.5,14.3 68.5,15.1 69.7,16.5 70.3,17.5 71,19.5 71.5,21.5 72,24.5 72.5,31.5 73.3,51.5 73.8,59.5 74.3,63.5 74.8,66.5 75.6,69.5 76.3,71.5 77.7,74.5 79.5,77.2 81.5,79.5 84.5,82.1 87.5,84.1 90.5,85.7 94.5,87.3 98.5,88.5 101.5,89.3 105.5,90 109.5,90.6 114.5,91.2 125.5,91.9 139.5,92.3 166.5,92.4 344.5,92.3 344.5,379.5 19.5,379.5 19.6,254.5 19.8,215.5 20.2,185.5 20.6,160.5 21.3,139.5 22.2,120.5 23.5,100.5 25.7,72.5 27.5,53.5 29.1,41.5 29.9,36.5 31.1,31.5 32.2,27.5 33.7,23.5 35.1,20.5 37,17.5 38.8,15.5 40.5,14.2 42.5,13.3Z"/><path fill="#1df175" d="M47,12.5 50.5,12.2 55.5,12.2 59.5,12.4 62.5,12.8 64.5,13.2 66.5,13.9 67.5,14.5 68.5,15.3 69.5,16.5 70.1,17.5 70.9,19.5 71.3,21.5 71.8,24.5 72.3,31.5 73.1,51.5 73.6,59.5 74.1,63.5 74.6,66.5 75.4,69.5 76.1,71.5 77.5,74.5 79.5,77.6 81.5,79.9 84.5,82.5 87.5,84.5 90.5,86.1 94.5,87.7 98.5,88.9 101.5,89.6 105.5,90.4 109.5,91 114.5,91.5 125.5,92.3 139.5,92.7 166.5,92.8 344.5,92.7 344.5,379.5 19.8,379.5 19.9,253.5 20.1,214.5 20.5,183.5 21,158.5 21.7,137.5 22.7,118.5 24.1,97.5 26.3,69.5 28.1,51.5 28.9,45.5 29.8,39.5 30.7,34.5 31.7,30.5 32.9,26.5 34.5,22.5 36,19.5 37.3,17.5 38.1,16.5 39.5,15.1 41.5,13.9 43.5,13.1Z"/><path fill="#2cf260" d="M48.8,12.5 52.5,12.3 56.5,12.4 60.5,12.7 63.5,13.1 65.5,13.7 66.5,14.1 67.5,14.7 68.5,15.5 69.4,16.5 70,17.5 70.7,19.5 71.2,21.5 71.6,24.5 72.2,31.5 73,51.5 73.5,59.5 73.9,63.5 74.4,66.5 75.2,69.5 75.8,71.5 77.5,75 79.5,78 81.5,80.2 84.5,82.9 87.5,84.9 90.5,86.4 94.5,88.1 98.5,89.3 101.5,90 105.5,90.8 109.5,91.4 114.5,91.9 125.5,92.6 139.5,93 166.5,93.2 344.5,93 344.5,379.5 20.1,379.5 20.2,249.5 20.5,210.5 20.9,179.5 21.4,154.5 22.2,133.5 23.3,113.5 24.9,91.5 27.2,64.5 28.9,48.5 29.8,41.5 30.7,36.5 31.8,31.5 32.9,27.5 34.4,23.5 35.7,20.5 37.5,17.5 39.3,15.5 40.5,14.6 41.5,14 43.5,13.3 45.5,12.9Z"/><path fill="#3bf34b" d="M43.3,13.5 46.5,12.9 50.5,12.6 55.5,12.5 60.5,12.8 63.5,13.3 65.5,13.8 66.5,14.2 67.5,14.8 68.3,15.5 69.2,16.5 69.8,17.5 70.5,19.5 71,21.5 71.5,24.5 71.9,30.5 72.8,51.5 73.4,60.5 73.9,64.5 74.5,67.5 75.3,70.5 76,72.5 77.5,75.4 79.5,78.4 81.5,80.6 84.5,83.2 87.5,85.2 90.5,86.8 94.5,88.4 98.5,89.7 101.5,90.4 105.5,91.1 109.5,91.7 114.5,92.3 125.5,93 139.5,93.4 165.5,93.5 344.5,93.4 344.5,379.5 20.4,379.5 20.5,263.5 20.9,196.5 21.3,172.5 21.8,151.5 22.5,133.5 23.4,116.5 25.2,91.5 27.7,62.5 29.4,47.5 30.2,41.5 31.1,36.5 32.2,31.5 33.3,27.5 34.7,23.5 36,20.5 37.8,17.5 39.5,15.6 41.5,14.2Z"/><path fill="#49f335" d="M44,13.5 47.5,12.9 51.5,12.7 56.5,12.7 61.5,13.1 64.5,13.7 66.5,14.4 67.5,15 68.2,15.5 69.1,16.5 69.7,17.5 70.4,19.5 71.2,23.5 71.8,30.5 72.6,51.5 73.2,60.5 73.7,64.5 74.3,67.5 75.1,70.5 75.8,72.5 77.5,75.9 79.5,78.8 81.5,81 84.5,83.6 87.5,85.6 90.5,87.2 94.5,88.8 98.5,90 101.5,90.8 105.5,91.5 109.5,92.1 114.5,92.6 125.5,93.3 139.5,93.7 165.5,93.9 344.5,93.7 344.5,379.5 20.6,379.5 20.8,263.5 21.2,196.5 21.6,172.5 22.1,151.5 22.8,133.5 23.8,116.5 25.7,90.5 28.2,61.5 29.9,46.5 30.8,40.5 31.7,35.5 32.8,30.5 33.9,26.5 35.4,22.5 36.8,19.5 38,17.5 38.8,16.5 39.8,15.5 41.5,14.4 42.5,13.9Z"/><path fill="#58f420" d="M44.6,13.5 48.5,13 52.5,12.8 57.5,12.9 61.5,13.3 64.5,13.8 66.5,14.5 67.5,15.1 68.9,16.5 69.5,17.5 70.2,19.5 71,23.5 71.6,30.5 72.4,51.5 73,60.5 73.5,64.5 74.1,67.5 74.9,70.5 75.6,72.5 76.5,74.5 77.5,76.4 79.5,79.2 81.5,81.4 84.5,84 87.5,86 90.5,87.6 94.5,89.2 98.5,90.4 101.5,91.1 105.5,91.9 109.5,92.5 114.5,93 125.5,93.7 139.5,94.1 165.5,94.2 344.5,94.1 344.5,379.5 20.9,379.5 21.1,263.5 21.5,196.5 21.9,172.5 22.4,151.5 23.2,133.5 24.1,116.5 26,91.5 28.6,61.5 30.3,46.5 31.1,40.5 32,35.5 33.1,30.5 34.6,25.5 36.1,21.5 37.6,18.5 39,16.5 40.5,15.2 42.5,14.1Z"/><path fill="#67f50b" d="M45.5,13.5 49.5,13.1 53.5,13 57.5,13.1 61.5,13.4 64.5,14 66.5,14.7 67.5,15.3 68.8,16.5 69.4,17.5 70.1,19.5 70.8,23.5 71.4,30.5 72.3,51.5 72.9,60.5 73.3,64.5 73.9,67.5 74.7,70.5 75.4,72.5 76.7,75.5 78.5,78.3 80.5,80.8 83.5,83.7 86.5,85.8 90.5,88 94.5,89.6 98.5,90.8 101.5,91.5 105.5,92.3 109.5,92.8 114.5,93.4 125.5,94.1 139.5,94.4 164.5,94.6 344.5,94.4 344.5,379.5 21.2,379.5 21.4,263.5 21.8,196.5 22.2,171.5 22.8,150.5 23.5,132.5 24.5,115.5 26.5,89.4 29.2,59.5 30.9,44.5 31.9,38.5 32.8,33.5 34,28.5 35.2,24.5 36.3,21.5 37.8,18.5 39.3,16.5 40.3,15.5 41.5,14.7 43.5,13.9Z"/><path fill="#72f600" d="M46.7,13.5 50.5,13.2 54.5,13.2 58.5,13.3 62.5,13.7 64.5,14.1 66.5,14.8 67.5,15.4 68.6,16.5 69.2,17.5 70,19.5 70.7,23.5 71.2,30.5 72.1,51.5 72.7,60.5 73.2,64.5 73.7,67.5 74.5,70.5 75.1,72.5 76.5,75.5 78.5,78.8 80.5,81.2 83.5,84.1 86.5,86.2 89.5,87.9 93.5,89.6 97.5,90.9 100.5,91.7 104.5,92.5 108.5,93.1 113.5,93.6 124.5,94.4 138.5,94.8 164.5,94.9 344.5,94.8 344.5,379.5 21.5,379.5 21.7,262.5 22.1,195.5 22.5,170.5 23.1,149.5 23.9,131.5 24.9,114.5 26.9,88.5 29.7,58.5 31.5,43.5 32.4,37.5 33.4,32.5 34.6,27.5 35.8,23.5 37,20.5 38.7,17.5 39.5,16.5 40.5,15.5 41.5,14.9 43.5,14.1Z"/><path fill="#7af700" d="M48.4,13.5 52.5,13.3 56.5,13.4 60.5,13.6 63.5,14 66.5,14.9 67.5,15.5 68.5,16.5 69.1,17.5 70,20.5 70.5,23.5 70.8,26.5 71.2,32.5 72,52.5 72.6,61.5 73.5,67.5 74.3,70.5 74.9,72.5 76.5,76 78.5,79.2 80.5,81.7 83.5,84.5 86.5,86.6 89.5,88.3 93.5,90 97.5,91.3 100.5,92.1 104.5,92.8 108.5,93.5 113.5,94 124.5,94.8 138.5,95.1 164.5,95.3 344.5,95.1 344.5,379.5 21.8,379.5 21.9,260.5 22.1,222.5 22.5,192.5 22.9,167.5 23.5,146.5 24.4,128.5 25.5,110.5 27.8,82.5 30.4,55.5 32.1,41.5 33.1,35.5 34.2,30.5 35.5,25.5 36.9,21.5 38.3,18.5 39.7,16.5 40.8,15.5 42.5,14.5 44.5,14Z"/><path fill="#82f800" d="M43.1,14.5 45.5,14 49.5,13.6 54.5,13.5 59.5,13.7 62.5,14 65.5,14.7 66.5,15 67.2,15.5 68.3,16.5 69,17.5 69.7,19.5 70.2,22.5 70.6,25.5 71,32.5 71.8,53.5 72.5,62.5 72.9,65.5 73.5,68.5 74.4,71.5 75.1,73.5 76.5,76.5 78.5,79.7 80.5,82.1 83.5,84.9 86.5,87 89.5,88.7 93.5,90.4 97.5,91.7 100.5,92.4 104.5,93.2 108.5,93.8 113.5,94.4 124.5,95.1 138.5,95.5 163.5,95.6 344.5,95.5 344.5,379.5 22.1,379.5 22.2,270.5 22.6,205.5 22.9,181.5 23.4,160.5 24,142.5 24.8,126.5 26.4,103.5 28.9,74.5 31.1,52.5 32.1,44.5 33,38.5 33.9,33.5 35,28.5 36.1,24.5 37.6,20.5 38.5,18.5 39.1,17.5 39.9,16.5 41.5,15.2Z"/><path fill="#8afa00" d="M43.5,14.5 46.5,14 50.5,13.7 55.5,13.7 60.5,13.9 63.5,14.3 65.5,14.8 67,15.5 68.2,16.5 68.9,17.5 69.2,18.5 69.7,20.5 70.2,23.5 70.7,29.5 71.6,51.5 72.2,60.5 72.6,64.5 73.1,67.5 73.8,70.5 74.8,73.5 76.5,77 78.5,80.2 80.5,82.6 83.5,85.3 86.5,87.5 89.5,89.1 93.5,90.8 97.5,92.1 100.5,92.8 104.5,93.6 108.5,94.2 113.5,94.8 124.5,95.5 138.5,95.9 163.5,96 344.5,95.8 344.5,379.5 22.4,379.5 22.5,270.5 22.9,205.5 23.2,181.5 23.7,160.5 24.3,143.5 25.1,127.5 26.7,104.5 29.3,74.5 31.6,51.5 32.6,43.5 33.5,37.5 34.4,32.5 35.6,27.5 36.7,23.5 37.8,20.5 38.7,18.5 40.1,16.5 41.5,15.3 42.5,14.8Z"/><path fill="#92fb00" d="M44.2,14.5 47.5,14 51.5,13.9 56.5,13.9 61.5,14.2 64.5,14.7 66.5,15.3 67.5,16 68.5,17.2 69.1,18.5 69.6,20.5 70.2,25.5 70.6,31.5 71.5,53.5 72.2,62.5 73.1,68.5 73.9,71.5 74.6,73.5 75.5,75.6 76.5,77.5 78.4,80.5 80.5,83 83.5,85.8 86.5,87.9 89.5,89.5 93.5,91.2 97.5,92.5 100.5,93.2 104.5,94 108.5,94.6 113.5,95.1 124.5,95.8 138.5,96.2 163.5,96.4 344.5,96.2 344.5,379.5 22.7,379.5 22.8,270.5 23.2,205.5 23.5,181.5 24,160.5 24.6,143.5 25.4,127.5 27,104.5 29.8,73.5 32.1,50.5 33.1,42.5 34.1,36.5 35,31.5 36.1,26.5 37.3,22.5 38.5,19.5 39.5,17.5 40.5,16.3 41.5,15.5 42.5,15Z"/><path fill="#9afc00" d="M45,14.5 48.5,14.1 53.5,14 58.5,14.1 62.5,14.5 64.5,14.8 66.5,15.4 67.5,16.1 68.5,17.4 69,18.5 69.5,20.5 70.1,25.5 70.4,31.5 71.3,53.5 72,62.5 72.9,68.5 73.7,71.5 74.5,73.8 76.2,77.5 78.5,81.1 80.5,83.5 83.5,86.2 86.5,88.3 89.5,89.9 93.5,91.6 97.5,92.9 100.5,93.6 104.5,94.4 108.5,95 113.5,95.5 124.5,96.2 138.5,96.6 162.5,96.7 344.5,96.5 344.5,379.5 23,379.5 23.1,270.5 23.5,205.5 23.8,181.5 24.3,160.5 24.9,142.5 25.8,126.5 27.5,102.8 30.4,71.5 32.6,49.5 33.7,41.5 34.6,35.5 35.7,29.5 36.7,25.5 37.9,21.5 39.1,18.5 39.7,17.5 40.5,16.5 41.5,15.6 42.5,15.1Z"/><path fill="#a2fe00" d="M46,14.5 49.5,14.2 54.5,14.2 58.5,14.3 62.5,14.6 64.5,14.9 66.5,15.5 67.8,16.5 68.5,17.5 68.9,18.5 69.3,20.5 69.9,25.5 71.1,53.5 71.8,62.5 72.4,66.5 73,69.5 73.8,72.5 74.5,74.5 75.5,76.7 76.4,78.5 78.4,81.5 80.5,83.9 83.3,86.5 86.5,88.7 89.5,90.4 93.5,92 97.5,93.3 100.5,94 104.5,94.8 108.5,95.3 113.5,95.9 124.5,96.6 138.5,96.9 162.5,97.1 344.5,96.9 344.5,379.5 23.3,379.5 23.4,269.5 23.8,204.5 24.1,180.5 24.6,159.5 25.3,141.5 26.2,125.5 28,101.5 31.1,67.5 33.4,46.5 34.3,39.5 35.3,33.5 36.3,28.5 37.5,23.5 38.9,19.5 39.9,17.5 40.7,16.5 41.5,15.8 42.5,15.2 44.5,14.7Z"/><path fill="#aaff00" d="M47.7,14.5 51.5,14.3 56.5,14.4 60.5,14.6 63.5,14.9 65.5,15.3 66.5,15.7 67.6,16.5 68.4,17.5 68.7,18.5 69.2,20.5 69.7,25.5 71,53.5 71.6,62.5 72.2,66.5 72.8,69.5 73.5,72.3 74.3,74.5 75.6,77.5 77.5,80.7 79.5,83.3 82.5,86.3 85.5,88.5 88.5,90.3 92.5,92.1 96.5,93.4 99.5,94.2 103.5,95 107.5,95.6 112.5,96.2 123.5,96.9 137.5,97.3 161.5,97.4 344.5,97.2 344.5,379.5 23.5,379.5 23.7,267.5 24.1,201.5 24.5,177.5 25,156.5 25.8,138.5 26.7,122.5 28.7,97.5 32.1,61.5 34.2,43.5 35.2,36.5 36.2,30.5 37,26.5 38.1,22.5 39.1,19.5 40,17.5 40.8,16.5 41.5,15.9 42.5,15.4 44.5,14.9Z"/><path fill="#b1ff00" d="M51.7,14.5 59.5,14.6 62.5,14.9 64.5,15.2 66.5,15.8 67.5,16.5 68.3,17.5 69,20.5 69.6,25.5 70.7,52.5 71.5,62.5 72,66.5 72.5,69.3 73.1,71.5 74,74.5 75.5,77.9 77.5,81.2 79.5,83.8 82.5,86.8 85.5,89 88.5,90.7 92.5,92.5 96.5,93.8 99.5,94.6 103.5,95.4 107.5,96 112.5,96.5 123.5,97.3 137.5,97.7 161.5,97.8 344.5,97.6 344.5,379.5 23.8,379.5 24,262.5 24.2,225.5 24.5,195.5 25,170.5 25.6,149.5 26.4,131.5 27.6,114.5 30.1,85.5 33.7,50.5 35.7,35.5 36.7,29.5 37.8,24.5 38.9,20.5 39.7,18.5 40.2,17.5 41.5,16.1 42.5,15.5 44.5,15 47.5,14.7Z"/><path fill="#b9ff00" d="M43,15.5 45.5,15 50.5,14.7 56.5,14.7 61.5,14.9 64.5,15.3 66.5,15.9 67.4,16.5 68.2,17.5 68.9,20.5 69.4,25.5 70.6,52.5 71.3,62.5 71.8,66.5 72.3,69.5 73.1,72.5 73.8,74.5 75.5,78.5 77.5,81.8 79.7,84.5 82.5,87.2 85.5,89.4 88.5,91.2 92.5,92.9 96.5,94.2 99.5,95 103.5,95.8 107.5,96.4 112.5,96.9 123.5,97.6 137.5,98 161.5,98.1 344.5,97.9 344.5,379.5 24.1,379.5 24.2,276.5 24.6,213.5 24.9,189.5 25.3,169.5 25.8,151.5 26.5,136.5 27.7,117.5 29.5,96 33.1,59.5 35.4,39.5 37.2,28.5 38.1,24.5 39.2,20.5 39.9,18.5 40.4,17.5 41.5,16.2 42.5,15.6Z"/><path fill="#c0ff00" d="M43.4,15.5 46.5,15 50.5,14.8 56.5,14.8 61.5,15.1 64.5,15.5 66.5,16 67.2,16.5 68,17.5 68.7,20.5 69.2,25.5 70.4,52.5 71.1,62.5 71.6,66.5 72.1,69.5 72.9,72.5 73.9,75.5 75.5,79 77.5,82.3 79.5,84.8 82.5,87.7 85.5,89.9 88.5,91.6 92.5,93.3 96.5,94.6 99.5,95.4 103.5,96.1 107.5,96.7 112.5,97.3 122.5,98 136.5,98.4 160.5,98.5 344.5,98.3 344.5,379.5 24.4,379.5 24.5,276.5 24.9,213.5 25.2,189.5 25.6,169.5 26.1,151.5 26.8,136.5 28,117.5 29.8,96.5 33.6,58.5 36,38.5 37,31.5 37.9,26.5 38.8,22.5 39.7,19.5 40.6,17.5 41.4,16.5 42.5,15.7Z"/><path fill="#c7ff00" d="M44.1,15.5 47.5,15.1 51.5,15 56.5,15 61.5,15.2 64.5,15.6 66.5,16.1 67.1,16.5 67.9,17.5 68.6,20.5 69.1,25.5 70.2,52.5 70.9,62.5 71.4,66.5 71.9,69.5 72.7,72.5 73.6,75.5 75.4,79.5 77.5,82.9 79.6,85.5 82.5,88.2 85.5,90.4 88.5,92.1 92.5,93.8 96.5,95 99.5,95.8 103.5,96.5 107.5,97.1 112.5,97.7 122.5,98.3 136.5,98.7 160.5,98.8 344.5,98.6 344.5,379.5 24.7,379.5 24.8,276.5 25.2,213.5 25.5,189.5 25.9,169.5 26.4,151.5 27.1,136.5 28.3,117.5 30.3,95.5 34.2,56.5 36.6,36.5 37.5,30.5 38.4,25.5 39.3,21.5 40.2,18.5 40.7,17.5 41.6,16.5 42.5,15.9Z"/><path fill="#cfff00" d="M45,15.5 48.5,15.2 53.5,15.1 58.5,15.2 62.5,15.5 64.5,15.7 66.5,16.2 67.8,17.5 68.5,20.5 68.9,25.5 70.1,52.5 70.7,62.5 71.2,66.5 71.7,69.5 72.4,72.5 73.4,75.5 74.6,78.5 76.5,81.9 78.5,84.7 80.1,86.5 81.5,87.9 84.5,90.2 87.5,92 91.5,93.8 95.5,95.2 98.5,95.9 102.5,96.8 106.5,97.4 111.5,98 121.5,98.7 135.5,99.1 159.5,99.2 344.5,99 344.5,379.5 25,379.5 25.1,275.5 25.5,212.5 25.8,188.5 26.2,168.5 26.8,150.5 27.5,135.5 28.8,116.5 30.7,94.5 34.9,53.5 36.2,42.5 37.4,33.5 39.1,23.5 40.1,19.5 40.8,17.5 41.7,16.5 42.5,16Z"/><path fill="#d6ff00" d="M46.4,15.5 54.5,15.3 62.5,15.6 64.5,15.8 66.5,16.3 67.7,17.5 68,18.5 68.3,20.5 68.8,25.5 69.9,52.5 70.6,62.5 71,66.5 71.5,69.5 72.2,72.5 73.1,75.5 74.5,78.9 76.5,82.5 78.7,85.5 81.5,88.4 84.5,90.7 87.5,92.5 91.5,94.3 95.5,95.6 98.5,96.4 102.5,97.2 106.5,97.8 111.5,98.3 121.5,99 135.5,99.4 158.5,99.6 344.5,99.3 344.5,379.5 25.3,379.5 25.4,274.5 25.8,210.5 26.1,186.5 26.6,166.5 27.1,149.5 27.9,133.5 29.3,113.5 31.5,90 35.9,48.5 37.2,37.5 38.3,29.5 39.8,21.5 40.3,19.5 41,17.5 41.9,16.5 42.5,16.1 44.5,15.7Z"/><path fill="#ddff00" d="M50,15.5 57.5,15.5 63.5,15.8 65.5,16.1 66.5,16.4 67.6,17.5 68.1,19.5 68.5,24.5 69.7,52.5 70.4,62.5 70.8,66.5 71.5,70.4 72.2,73.5 73.2,76.5 74.5,79.5 76.5,83.1 78.5,85.8 81.5,88.9 84.5,91.2 87.5,92.9 91.5,94.7 95.5,96 98.5,96.8 102.5,97.6 106.5,98.2 111.5,98.7 121.5,99.4 135.5,99.8 158.5,99.9 344.5,99.7 344.5,379.5 25.6,379.5 25.7,269.5 26.2,204.5 26.5,180.5 27.1,159.5 27.8,142.5 28.7,126.5 29.6,114.5 30.7,101.5 34.8,61.5 37.7,36.5 38.8,28.5 39.8,22.5 40.5,19.5 41.1,17.5 42.1,16.5 42.5,16.2 44.5,15.8Z"/><path fill="#e3fd00" d="M42.2,16.5 42.5,16.3 43.5,16.1 47.5,15.7 53.5,15.6 59.5,15.7 63.5,16 65.5,16.2 66.5,16.5 67.5,17.5 67.9,19.5 68.4,24.5 69.5,51.5 70.2,62.5 70.6,66.5 71.3,70.5 72,73.5 72.9,76.5 74.5,80.2 76.5,83.7 78.6,86.5 81.5,89.4 84.5,91.7 87.5,93.4 91.5,95.1 95.5,96.4 98.5,97.2 102.5,98 106.5,98.6 111.5,99.1 121.5,99.8 135.5,100.2 158.5,100.3 344.5,100 344.5,379.5 25.9,379.5 26,282.5 26.3,221.5 26.9,177.5 27.4,160.5 27.9,145.5 29,126.5 30.4,108.5 32.6,86.5 36.8,47.5 38.5,32.5 40,22.5 40.6,19.5 41.2,17.5Z"/><path fill="#e7f800" d="M42.4,16.5 44.5,16.1 48.5,15.9 54.5,15.8 60.5,15.9 65.5,16.3 66.5,16.6 67.4,17.5 67.8,19.5 68.2,23.5 69.3,51.5 70,62.5 70.4,66.5 71.1,70.5 71.8,73.5 72.7,76.5 74.3,80.5 76,83.5 78.5,87 81,89.5 82.5,90.8 84.5,92.2 87.5,93.9 91.5,95.6 95.5,96.9 98.5,97.6 102.5,98.4 106.5,99 111.5,99.5 121.5,100.1 135.5,100.5 157.5,100.6 241.5,100.4 344.5,100.4 344.5,379.5 26.2,379.5 26.3,283.5 26.6,222.5 27.2,178.5 27.6,161.5 28.2,146.5 29.3,127.5 30.7,109.5 32.7,88.5 36.9,49.5 38.9,32.5 40.2,22.5 40.8,19.5 41.4,17.5Z"/><path fill="#ebf300" d="M42.7,16.5 44.5,16.2 48.5,16 54.5,15.9 60.5,16.1 65.5,16.4 66.5,16.7 67.3,17.5 67.6,18.5 67.7,19.5 68,23.5 69.1,51.5 69.8,62.5 70.2,66.5 70.9,70.5 71.5,73.5 72.5,76.8 74,80.5 75.6,83.5 77.6,86.5 80.5,89.6 83.5,92 86.5,93.8 90.5,95.7 94.5,97 97.5,97.8 101.5,98.6 105.5,99.2 110.5,99.8 120.5,100.5 134.5,100.9 156.5,101 240.5,100.8 344.5,100.7 344.5,379.5 26.4,379.5 26.5,283.5 26.9,222.5 27.5,178.5 27.9,161.5 28.5,146.5 29.6,127.5 31.1,108.5 33.1,88.5 37.8,44.5 39.7,28.5 40.8,20.5 41.5,17.5 42.5,16.6Z"/><path fill="#efef00" d="M43.3,16.5 45.5,16.3 50.5,16.1 61.5,16.3 65.5,16.6 66.5,16.9 67.1,17.5 67.5,18.9 67.8,22.5 68.9,50.5 69.6,62.5 70.1,66.5 70.7,70.5 71.5,74.3 72.5,77.5 74.1,81.5 75.8,84.5 77.9,87.5 80.5,90.2 83.5,92.5 86.5,94.3 90.5,96.1 94.5,97.4 97.5,98.2 101.5,99 105.5,99.6 110.5,100.2 120.5,100.8 134.5,101.2 156.5,101.3 240.5,101.1 344.5,101.1 344.5,379.5 26.7,379.5 26.8,283.5 27.1,222.5 27.8,178.5 28.2,161.5 28.8,146.5 30,126.5 31.5,107.5 33.5,88.2 39.6,31.5 40.7,22.5 41.3,18.5 41.7,17.5 42.5,16.7Z"/><path fill="#f3ea00" d="M44.2,16.5 52.5,16.3 62.5,16.4 64.5,16.6 66.5,17 67,17.5 67.4,19.5 67.6,21.5 68.7,50.5 69.5,62.5 69.9,66.5 70.5,70.8 71.3,74.5 72.2,77.5 73.8,81.5 75.5,84.7 77.5,87.6 79.2,89.5 80.5,90.7 83.5,93.1 86.5,94.8 90.5,96.6 94.5,97.9 97.5,98.6 101.5,99.4 105.5,100 110.5,100.6 120.5,101.2 134.5,101.6 156.5,101.7 239.5,101.5 344.5,101.5 344.5,379.5 27,379.5 27.1,282.5 27.4,221.5 28.1,177.5 28.6,160.5 29.2,145.5 30.3,126.5 31.9,107.5 41,21.5 41.5,18.5 41.8,17.5 42.5,16.9Z"/><path fill="#f7e500" d="M47.1,16.5 54.5,16.4 60.5,16.5 65.5,17 66.5,17.2 66.8,17.5 67.5,22.6 68.5,49.5 69.3,62.5 69.7,66.5 70.2,70.5 71.1,74.5 71.9,77.5 73.4,81.5 75,84.5 76.9,87.5 79.5,90.4 82.5,92.9 85.5,94.8 89.5,96.7 93.5,98 96.5,98.8 100.5,99.7 104.5,100.3 109.5,100.9 119.5,101.5 133.5,101.9 155.5,102.1 239.5,101.9 344.5,101.8 344.5,379.5 27.3,379.5 27.4,278.5 27.8,216.5 28.1,192.5 28.5,172.5 29.1,154.5 29.8,139.5 30.8,123.5 32.3,106.5 38.6,48.5 41.5,19.5 42,17.5 42.5,17 44.5,16.7Z"/><path fill="#fbe100" d="M42.2,17.5 42.5,17.2 45.5,16.9 53.5,16.7 62.5,16.9 66.5,17.3 66.7,17.5 67.5,26.7 68.4,50.5 69.2,63.5 69.6,67.5 70.2,71.5 71.1,75.5 71.9,78.5 73.5,82.5 75.1,85.5 77.2,88.5 79.5,91 82.5,93.5 85.5,95.3 89.5,97.2 93.5,98.5 96.5,99.3 100.5,100.1 104.5,100.7 109.5,101.2 119.5,101.9 133.5,102.3 154.5,102.4 238.5,102.2 344.5,102.2 344.5,379.5 27.6,379.5 27.7,287.5 28,228.5 28.5,185.5 29.4,153.5 30.6,131.5 32.2,111.5 33.9,94.5 39.2,46.5 41.5,21.1Z"/><path fill="#ffdc00" d="M42.3,17.5 42.5,17.3 45.5,17.1 52.5,17 60.5,17.1 66.6,17.5 67.5,31.8 68.3,51.5 69,63.5 69.4,67.5 70,71.5 70.8,75.5 71.6,78.5 73.2,82.5 74.7,85.5 76.7,88.5 78.4,90.5 79.5,91.6 82.5,94 85.5,95.8 89.5,97.6 93.5,99 96.5,99.7 100.5,100.5 104.5,101.1 109.5,101.6 119.5,102.3 133.5,102.7 154.5,102.8 238.5,102.6 344.5,102.5 344.5,379.5 27.9,379.5 28,287.5 28.3,228.5 28.8,185.5 29.2,168.5 29.8,153.5 30.8,132.5 32.4,112.5 34.2,95.5 39.1,50.5 40.6,35.5 41.5,24.1Z"/><path fill="#ffd500" d="M42.5,17.5 52.5,17.3 63.4,17.5 64.5,18.6 66.5,20.1 67.5,36.9 68.3,56.5 68.9,64.5 69.3,68.5 69.9,72.5 70.8,76.5 71.7,79.5 73.2,83.5 74.8,86.5 76.9,89.5 79.5,92.2 82.5,94.6 85.5,96.4 89.5,98.1 93.5,99.4 96.5,100.1 100.5,100.9 104.5,101.5 109.5,102 119.5,102.7 133.5,103 153.5,103.1 237.5,102.9 344.5,102.9 344.5,379.5 28.2,379.5 28.3,288.5 28.6,229.5 29.1,186.5 30,154.5 31.1,133.5 32.6,114.5 34.3,97.5 39.6,49.5Z"/><path fill="#ffcf00" d="M47.2,22.5 49.5,22 51.5,21.8 53.5,21.8 55.5,22.1 57.5,22.6 59.5,23.3 66.5,26.3 67.5,41.7 68.3,58.5 68.9,66.5 69.4,70.5 70.1,74.5 71.1,78.5 72,81.5 73.5,84.9 75.5,88.3 77.5,90.9 79.5,92.9 82.5,95.2 85.5,96.9 89.5,98.6 93.5,99.9 96.5,100.6 100.5,101.3 108.5,102.3 118.5,103 132.5,103.4 153.5,103.5 237.5,103.3 344.5,103.2 344.5,379.5 28.5,379.5 28.6,280.5 29,218.5 29.3,194.5 29.7,174.5 30.2,157.5 30.9,142.5 31.9,126.5 33.3,110.5 34.9,95.5 39.5,54.5 40.7,42.5 41.5,32.8 42.5,23.9Z"/><path fill="#ffc800" d="M44.7,29.5 47.5,29.1 50.5,28.9 53.5,29 55.5,29.2 60.5,30.2 66.5,32.2 67.5,46.1 68.2,60.5 68.9,68.5 69.5,72.5 70.2,76.5 71.4,80.5 72.5,83.5 73.9,86.5 75.8,89.5 78.4,92.5 80.5,94.3 83.5,96.4 86.5,97.9 90.5,99.4 94.5,100.6 97.5,101.2 101.5,101.9 109.5,102.8 119.5,103.4 133.5,103.8 152.5,103.8 236.5,103.6 344.5,103.6 344.5,379.5 28.8,379.5 28.9,284.5 29.2,224.5 29.8,181.5 30.3,164.5 30.8,149.5 31.9,131.5 33.3,113.5 35.1,96.5 39.8,55.5 41.5,37.4 42.5,29.9Z"/><path fill="#ffc100" d="M42.5,35.5 42.5,35.3 43.5,35.2 47.5,34.7 51.5,34.6 54.5,34.8 57.5,35.2 60.5,35.7 66.5,37.4 67.5,50.2 68.2,63.5 68.9,70.5 69.6,74.5 70.5,78.5 71.5,81.9 72.5,84.5 74.5,88.3 76.5,91.1 78.5,93.2 81.3,95.5 84.5,97.5 87.5,98.9 91.5,100.2 95.5,101.3 102.5,102.5 110.5,103.3 120.5,103.8 134.5,104.1 344.5,103.9 344.5,379.5 29.1,379.5 29.1,289.5 29.4,230.5 30,188.5 30.9,156.5 32,134.5 32.7,124.5 33.7,113.5 35.5,96.5 39.8,58.5 41.5,41.8Z"/><path fill="#ffbb00" d="M42.5,40.5 42.5,40.2 46.5,39.8 50.5,39.6 53.5,39.7 56.5,40 59.5,40.5 62.5,41.1 66.5,42.2 67.5,54 68.2,65.5 69,72.5 69.7,76.5 70.7,80.5 71.7,83.5 73,86.5 74.5,89.1 76.5,91.8 78.5,93.9 81.5,96.3 84.5,98 87.5,99.4 91.5,100.7 95.5,101.7 102.5,102.9 110.5,103.7 120.5,104.2 133.5,104.5 151.5,104.6 235.5,104.3 344.5,104.3 344.5,379.5 29.4,379.5 29.4,289.5 29.7,231.5 30.2,189.5 31.1,157.5 32.3,134.5 33,124.5 34,113.5 35.7,97.5 40,60.5 41.5,46.1Z"/><path fill="#ffb400" d="M44.3,44.5 49.5,44.2 55.5,44.5 60.5,45.1 66.5,46.5 67.5,57.5 68.2,67.5 69.1,74.5 69.9,78.5 71,82.5 72.1,85.5 73.5,88.3 75.5,91.3 77.5,93.6 79.6,95.5 82.5,97.5 85.5,99.1 88.5,100.3 92.5,101.5 96.5,102.4 103.5,103.4 111.5,104.2 121.5,104.6 134.5,104.9 344.5,104.6 344.5,379.5 29.6,379.5 29.7,286.5 30,226.5 30.7,183.5 31.1,166.5 31.7,151.5 32.7,132.5 34.2,114.5 35.8,99.5 39.9,64.5 41.5,50.1 42.5,44.7Z"/><path fill="#ffad00" d="M47.4,48.5 51.5,48.5 56.5,48.8 61.5,49.5 66.5,50.6 67.5,60.7 68.2,69.5 69.2,76.5 70.1,80.5 71,83.5 72.1,86.5 73.5,89.2 75.5,92.1 77.5,94.4 79.5,96.1 82.5,98.1 85.5,99.6 88.5,100.8 92.5,102 96.5,102.8 103.5,103.9 111.5,104.6 121.5,105 134.5,105.2 244.5,105 344.5,105 344.5,379.5 29.9,379.5 30,281.5 30.4,220.5 30.7,196.5 31.1,176.5 31.7,159.5 32.3,144.5 33.3,128.5 34.8,112.5 36.3,98.5 41.5,53.9 42.5,48.9Z"/><path fill="#ffa700" d="M46.6,52.5 51.5,52.4 56.5,52.7 61.5,53.4 66.5,54.4 67.5,63.7 68.2,71.5 69.1,77.5 70,81.5 70.9,84.5 72.1,87.5 73.5,90.1 75.5,92.9 77.5,95.1 79.5,96.8 82.1,98.5 85.5,100.2 88.5,101.3 92.5,102.4 96.5,103.3 103.5,104.3 111.5,104.9 121.5,105.4 133.5,105.6 244.5,105.4 344.5,105.3 344.5,379.5 30.2,379.5 30.3,284.5 30.7,223.5 31.4,179.5 31.9,162.5 32.5,147.5 33.5,130.5 35,113.5 36.6,98.5 41.5,57.6 42.5,52.8Z"/><path fill="#ffa200" d="M43.1,56.5 48.5,56.2 54.5,56.3 60.5,56.9 66.5,58 67.5,66.4 68.2,73.5 69.2,79.5 70.2,83.5 71.3,86.5 72.5,89.2 73.8,91.5 75.5,93.8 77.5,95.8 79.5,97.5 82.5,99.3 85.5,100.7 89.5,102.1 93.5,103.1 97.5,103.9 104.5,104.8 112.5,105.4 122.5,105.8 134.5,106 240.5,105.7 344.5,105.7 344.5,379.5 30.5,379.5 30.6,290.5 30.9,232.5 31.4,190.5 32.3,158.5 32.9,145.5 33.6,133.5 34.5,122.5 35.6,110.5 41.5,61.1 42.5,56.6Z"/><path fill="#ff9d00" d="M42.4,60.5 42.5,60.1 45.5,59.9 49.5,59.7 53.5,59.8 59.5,60.2 66.5,61.4 68.2,75.5 68.9,79.5 69.5,82.2 70.5,85.6 71.7,88.5 73.2,91.5 74.5,93.4 76.5,95.7 78.5,97.4 80.5,98.8 83.5,100.4 86.5,101.7 90.5,102.9 94.5,103.8 98.5,104.5 105.5,105.3 113.5,105.8 122.5,106.2 134.5,106.3 238.5,106.1 344.5,106 344.5,379.5 30.8,379.5 30.9,292.5 31.1,235.5 31.7,193.5 32.5,161.5 33,148.5 33.7,137.5 34.5,126.5 35.4,116.5 37.2,99.5 41.5,64.5Z"/><path fill="#ff9700" d="M42.6,63.5 48.5,63.1 54.5,63.2 60.5,63.7 66.5,64.6 68.2,77.5 68.8,80.5 69.5,83.6 70.5,86.8 71.6,89.5 73.3,92.5 74.5,94.3 76.5,96.5 78.5,98.1 80.5,99.5 83.5,101 86.5,102.2 90.5,103.4 94.5,104.3 98.5,104.9 105.5,105.7 113.5,106.2 122.5,106.5 134.5,106.7 237.5,106.4 344.5,106.4 344.5,379.5 31.1,379.5 31.2,292.5 31.4,235.5 32,193.5 32.8,161.5 33.4,148.5 34,136.5 34.9,125.5 35.8,115.5 37.6,99.5 41.5,67.8 42.5,63.5Z"/><path fill="#ff9200" d="M46.4,66.5 51.5,66.4 56.5,66.5 61.5,67 66.5,67.7 67.5,73.8 68.3,79.5 69.5,85 70.5,88.1 71.5,90.5 72.6,92.5 74.5,95.2 76.5,97.3 78.5,98.9 80.5,100.2 83.5,101.6 86.5,102.8 90.5,103.9 94.5,104.8 98.5,105.4 105.5,106.1 113.5,106.6 122.5,106.9 134.5,107.1 235.5,106.8 344.5,106.7 344.5,379.5 31.4,379.5 31.5,285.5 31.8,225.5 32.5,182.5 33,165.5 33.6,150.5 34.6,132.5 36,116.5 37.8,100.5 41.5,70.9 42.5,66.8Z"/><path fill="#ff8d00" d="M42.4,70.5 42.5,69.9 47.5,69.6 52.5,69.5 59.5,69.9 66.5,70.7 67.5,76.1 68.3,81.5 69,84.5 69.8,87.5 71,90.5 72,92.5 73.5,94.8 74.9,96.5 77,98.5 79.5,100.3 81.8,101.5 84.5,102.6 87.5,103.6 91.5,104.6 95.5,105.4 99.5,106 105.5,106.5 113.5,107 122.5,107.3 134.5,107.4 234.5,107.1 344.5,107.1 344.5,379.5 31.7,379.5 31.8,294.5 32,237.5 32.5,196.5 33.3,164.5 34.4,140.5 35.2,129.5 36.1,119.5 37.9,102.5 41.5,74Z"/><path fill="#ff8700" d="M42.4,73.5 42.5,73 47.5,72.7 52.5,72.6 59.5,72.8 66.5,73.6 67.5,78.4 68.4,83.5 69.7,88.5 70.9,91.5 71.9,93.5 73.5,95.8 75,97.5 77.3,99.5 79.5,101 81.5,102 84.5,103.2 87.5,104.2 91.5,105.1 95.5,105.9 99.5,106.4 105.5,107 113.5,107.4 122.5,107.7 133.5,107.8 233.5,107.5 344.5,107.4 344.5,379.5 32,379.5 32,295.5 32.3,238.5 32.8,197.5 33.6,165.5 34.7,141.5 35.4,130.5 36.3,120.5 38.1,103.5 41.5,77Z"/><path fill="#ff8200" d="M42.4,76.5 42.5,76 47.5,75.6 51.5,75.5 58.5,75.7 66.5,76.4 67.5,80.6 68.5,85.9 69.9,90.5 71.3,93.5 72.5,95.5 74.1,97.5 75.5,98.9 77.5,100.5 79.5,101.7 82.5,103.1 85.5,104.2 88.5,105 92.5,105.8 100.5,107 106.5,107.4 114.5,107.8 134.5,108.2 231.5,107.8 344.5,107.8 344.5,379.5 32.3,379.5 32.3,295.5 32.6,239.5 33.1,198.5 33.8,166.5 34.9,142.5 35.7,131.5 36.5,121.5 38.1,106.5 40.5,87.5 41.5,79.9Z"/><path fill="#ff7b00" d="M48.5,78.5 53.5,78.4 57.5,78.5 66.5,79.1 67.5,82.8 68.5,87.7 69.4,90.5 70.2,92.5 71.2,94.5 72.5,96.6 74.1,98.5 75.5,99.8 77.5,101.2 79.7,102.5 82.5,103.7 85.5,104.7 88.5,105.5 92.5,106.3 100.5,107.4 106.5,107.9 114.5,108.2 133.5,108.5 230.5,108.2 344.5,108.1 344.5,379.5 32.5,379.5 32.7,284.5 33,223.5 33.3,199.5 33.8,179.5 34.3,162.5 34.9,147.5 35.9,132.5 37.1,118.5 38.8,103.5 41.5,82.7 42.5,78.9Z"/><path fill="#ff7500" d="M45.4,81.5 50.5,81.3 55.5,81.2 60.5,81.4 66.5,81.8 67.5,85.1 68.5,89.5 70,93.5 71,95.5 72.4,97.5 73.5,98.9 75.5,100.7 77.5,102 79.5,103.1 82.5,104.4 85.5,105.3 88.5,106.1 92.5,106.8 100.5,107.8 106.5,108.3 114.5,108.6 133.5,108.9 228.5,108.6 344.5,108.5 344.5,379.5 32.8,379.5 32.9,289.5 33.2,231.5 33.8,189.5 34.2,172.5 34.8,157.5 35.7,139.5 37,123.5 38.7,107.5 41.5,85.5 42.5,81.7Z"/><path fill="#ff6e00" d="M42.5,84.5 48.5,84.1 54.5,84 60.5,84.1 66.5,84.4 67.5,87.3 68.6,91.5 69.3,93.5 70.3,95.5 71.5,97.5 72.5,98.8 74.2,100.5 75.5,101.6 77.5,102.8 79.5,103.8 82.5,105 85.5,105.9 88.5,106.6 92.5,107.3 96.5,107.9 101.5,108.4 107.5,108.7 114.5,109 133.5,109.3 227.5,108.9 344.5,108.8 344.5,379.5 33.1,379.5 33.2,297.5 33.4,242.5 33.9,201.5 34.6,170.5 35.7,145.5 36.4,134.5 37.2,124.5 38.7,110.5 40.9,92.5 41.5,88.3Z"/><path fill="#ff6700" d="M42.4,87.5 42.5,87.2 43.5,87.1 52.5,86.7 59.5,86.7 66.5,87 67.5,89.5 68.7,93.5 69.5,95.5 70.5,97.3 71.5,98.8 73.1,100.5 74.5,101.7 76.5,103.1 78.5,104.1 80.5,105 83.5,106 86.5,106.7 93.5,108 102.5,108.9 115.5,109.4 132.5,109.6 226.5,109.3 344.5,109.2 344.5,379.5 33.4,379.5 33.5,298.5 33.7,243.5 34.2,202.5 34.9,171.5 35.9,146.5 36.6,135.5 37.4,125.5 38.8,112.5 40.6,97.5 41.5,91Z"/><path fill="#ff6100" d="M48.5,89.5 57.5,89.3 66.5,89.5 67.5,91.7 68.8,95.5 69.5,97 70.5,98.7 71.5,100 73,101.5 74.5,102.7 76.5,103.9 78.5,104.9 80.5,105.7 83.5,106.6 86.5,107.3 93.5,108.5 102.5,109.3 115.5,109.8 132.5,110 225.5,109.6 344.5,109.5 344.5,379.5 33.7,379.5 33.8,286.5 34.2,226.5 34.9,182.5 35.4,165.5 36,150.5 36.9,136.5 37.9,123.5 39.3,110.5 41.5,93.6 42.5,89.9Z"/><path fill="#ff5a00" d="M43.2,92.5 49.5,92.1 55.5,91.9 60.5,91.9 66.5,92 67.5,93.9 68,95.5 68.9,97.5 70.5,100.1 71.5,101.2 72.9,102.5 74.5,103.7 76.5,104.8 78.5,105.7 81.5,106.7 87.5,108.1 94.5,109.1 103.5,109.8 115.5,110.2 131.5,110.4 223.5,110 344.5,109.9 344.5,379.5 34,379.5 34.1,297.5 34.3,242.5 34.8,201.5 35.5,170.5 36,156.5 36.7,144.5 37.4,133.5 38.4,122.5 39.7,110.5 41.5,96.3 42.5,92.6Z"/><path fill="#ff5300" d="M53.2,94.5 59.5,94.4 66.5,94.5 67.5,96.1 68.1,97.5 69.1,99.5 70.5,101.5 71.5,102.5 73.5,104.1 76.5,105.7 78.7,106.5 81.5,107.4 87.5,108.6 94.5,109.5 103.5,110.2 115.5,110.6 130.5,110.7 222.5,110.3 344.5,110.2 344.5,379.5 34.3,379.5 34.4,278.5 34.9,216.5 35.2,192.5 35.8,171.5 36.4,154.5 37.3,139.5 38.4,125.5 39.8,112.5 41.5,98.9 42.5,95.2Z"/><path fill="#ff4c00" d="M45.8,97.5 56.5,96.9 66.5,96.9 67.5,98.3 68.5,100.3 69.3,101.5 71.2,103.5 72.5,104.5 74.2,105.5 77.5,106.9 82.5,108.3 88.5,109.3 95.5,110.1 104.5,110.7 115.5,111 130.5,111.1 221.5,110.7 344.5,110.6 344.5,379.5 34.6,379.5 34.7,292.5 35,235.5 35.5,193.5 36.4,161.5 37.3,144.5 38.3,130.5 39.6,116.5 41.5,101.5 42.5,97.8Z"/><path fill="#ff4400" d="M54.3,99.5 60.5,99.3 66.5,99.3 67.5,100.4 68.8,102.5 69.7,103.5 70.8,104.5 73.5,106.1 75.5,107 77.5,107.7 82.5,108.9 88.5,109.9 95.5,110.6 104.5,111.1 115.5,111.4 129.5,111.5 220.5,111 344.5,110.9 344.5,379.5 34.9,379.5 35,278.5 35.5,215.5 35.9,191.5 36.4,170.5 37.1,153.5 38,138.5 39,125.5 40.3,113.5 41.5,104.1 42.5,100.3Z"/><path fill="#ff3c00" d="M47.2,102.5 57.5,101.8 66.5,101.7 67.5,102.5 69.1,104.5 70.3,105.5 71.5,106.2 74.5,107.6 78.5,108.7 83.5,109.7 90.5,110.6 97.5,111.2 106.5,111.6 116.5,111.8 128.5,111.8 218.5,111.4 344.5,111.3 344.5,379.5 35.2,379.5 35.3,290.5 35.6,232.5 36.2,190.5 36.6,173.5 37.2,158.5 37.9,144.5 38.8,131.5 40,119.5 41.5,106.7 42.5,102.9Z"/><path fill="#ff3400" d="M53.4,104.5 60.5,104.1 66.5,104 67.5,104.6 68.4,105.5 69.5,106.4 71.5,107.5 74.4,108.5 78.5,109.5 84.4,110.5 90.5,111.2 98.5,111.7 107.5,112.1 127.5,112.2 217.5,111.8 344.5,111.6 344.5,379.5 35.4,379.5 35.6,280.5 36,218.5 36.4,194.5 36.9,174.5 37.6,156.5 38.4,141.5 39.3,129.5 40.5,117.5 41.5,109.3 42.5,105.5Z"/><path fill="#ff2c00" d="M58.7,106.5 66.5,106.2 67.5,106.7 69.5,107.9 72.5,109 77.5,110.1 83.5,111 88.5,111.5 94.5,112 107.5,112.5 125.5,112.6 216.5,112.1 344.5,112 344.5,379.5 35.7,379.5 35.9,273.5 36.1,238.5 36.4,209.5 36.9,185.5 37.5,164.5 38.4,146.5 39.4,131.5 40.4,121.5 41.5,111.9 42.5,108Z"/><path fill="#ff2400" d="M63.5,108.5 66.5,108.4 69.9,109.5 73.5,110.3 78.5,111 84.5,111.7 95.5,112.5 109.5,112.9 127.5,113 222.5,112.4 344.5,112.3 344.5,379.5 36,379.5 36.2,268.5 36.5,231.5 36.8,202.5 37.4,177.5 38.2,156.5 39.1,139.5 40.4,124.5 41.5,114.6 42.5,110.6 57.5,108.9Z"/><path fill="#ff1c00" d="M55.8,111.5 61.5,110.8 66.5,110.6 81.5,112.1 90.5,112.8 101.5,113.2 114.5,113.4 214.5,112.8 344.5,112.7 344.5,379.5 36.3,379.5 36.5,277.5 36.9,214.5 37.4,190.5 37.9,169.5 38.7,152.5 39.6,137.5 40.4,127.5 41.5,117.4 42.5,113.2Z"/><path fill="#ff1400" d="M67.5,112.5 69.5,112.3 72.5,112.2 93.5,113.4 102.5,113.7 113.5,113.8 212.5,113.2 344.5,113 344.5,379.5 36.6,379.5 36.8,265.5 37.1,228.5 37.5,198.5 38.1,173.5 39,152.5 40,135.5 41.5,120.2 42.5,115.9 48.5,115.1 60.5,113.1Z"/><path fill="#ff1105" d="M70.2,113.5 72.5,113.3 75.5,113.2 95.5,114 113.5,114.1 209.5,113.5 344.5,113.4 344.5,379.5 36.9,379.5 37.1,267.5 37.3,230.5 37.7,201.5 38.3,176.5 39.1,155.5 40.1,138.5 41.5,123.1 42.5,118.6 49.5,117.6 61.5,115.1 64.5,114.7 66.5,114.6 68.5,113.9Z"/><path fill="#ff0f0b" d="M71.1,114.5 73.5,114.2 77.5,114 96.5,114.5 111.5,114.6 207.5,113.9 344.5,113.8 344.5,379.5 37.2,379.5 37.4,269.5 37.6,233.5 38,204.5 38.5,179.5 39.3,158.5 40.2,141.5 41.5,126.2 42.5,121.4 45.5,121 49.5,120.3 53.5,119.3 62.5,117 64.5,116.6 66.5,116.4 69.5,114.9Z"/><path fill="#ff0c10" d="M162.2,114.5 228.5,114.2 344.5,114.1 344.5,379.5 37.5,379.5 37.7,264.5 38,227.5 38.4,197.5 39.1,171.5 40,149.5 40.7,138.5 41.5,129.5 42.5,124.4 47.5,123.5 53.5,122 63.5,118.7 66.5,118 68.5,116.6 70.5,115.7 72.5,115.3 74.5,115 80.5,114.8 109.5,115Z"/><path fill="#ff0915" d="M251.1,114.5 344.5,114.5 344.5,379.5 37.8,379.5 38,265.5 38.2,228.5 38.7,199.5 39.3,173.5 40.2,151.5 41.5,133 42.5,127.5 45.5,127 49.5,126.1 52.5,125.2 55.5,124.1 59.5,122.5 64.5,120.1 66.5,119.4 68.5,117.8 70.5,116.8 73.5,116 77.5,115.6 83.5,115.4 111.5,115.4 178.5,114.7Z"/><path fill="#ff071b" d="M134.3,115.5 170.5,115.1 210.5,114.9 344.5,114.8 344.5,379.5 38.1,379.5 38.2,268.5 38.5,231.5 38.9,202.5 39.5,176.5 40.4,154.5 41.5,136.8 42.5,130.8 46.5,130 49.5,129.3 53.5,127.9 56.5,126.7 60.5,124.7 63.5,122.8 65.5,121.3 68.5,118.8 69.5,118.2 71.5,117.4 74.5,116.7 78.5,116.3 85.5,116Z"/><path fill="#ff0420" d="M170.5,115.5 234.5,115.2 344.5,115.2 344.5,379.5 38.3,379.5 38.5,270.5 38.8,234.5 39.1,205.5 39.7,179.5 40.5,157.5 41.5,140.9 42.5,134.3 45.5,133.8 49.5,132.7 53.5,131.3 56.5,129.9 60.5,127.7 62.5,126.3 64.5,124.8 66.5,122.7 67.3,121.5 67.7,120.5 68.8,119.5 70.5,118.7 72.5,118 76.5,117.2 82.5,116.7 91.5,116.4Z"/><path fill="#ff0125" d="M116,116.5 156.5,116 198.5,115.7 344.5,115.5 344.5,379.5 38.6,379.5 38.8,272.5 39,237.5 39.4,208.5 39.9,182.5 40.7,160.5 41.5,145.5 42.5,138.2 47.5,137.1 51.5,135.8 56.5,133.5 60.5,131.2 63.5,129 66.5,126.1 67.5,124.8 68.5,123.2 69.2,121.5 69.3,120.5 70.6,119.5 72.5,118.9 74.5,118.4 77.5,117.8 84.5,117.2 94.5,116.9Z"/><path fill="#ff002b" d="M141.9,116.5 174.5,116.2 213.5,116 344.5,115.9 344.5,379.5 38.9,379.5 39.1,275.5 39.3,240.5 39.6,211.5 40.2,185.5 40.9,163.5 41.5,150.6 42.5,142.5 45.5,141.8 48.5,140.9 53.5,139 58.5,136.4 62.5,133.7 65.5,131.2 67.1,129.5 68.5,127.8 69.5,126.4 70.5,124.5 71.2,122.5 71.6,120.5 73.5,119.4 76.5,118.8 80.5,118.2 89.5,117.6 107.5,117.1Z"/><path fill="#ff0030" d="M179.3,116.5 240.5,116.3 344.5,116.2 344.5,379.5 39.2,379.5 39.4,278.5 39.9,215.5 40.4,189.5 41,167.5 41.5,156.4 42.5,147.2 47.5,145.9 50.5,144.8 53.5,143.5 58.5,140.9 61.5,138.9 63.5,137.4 65.5,135.8 67.5,133.8 70.3,130.5 71.7,128.5 73.1,125.5 74.1,122.5 74.3,120.5 76.5,119.5 80.5,118.9 85.5,118.4 91.5,118 100.5,117.7 135.5,117Z"/><path fill="#ff0035" d="M124.8,117.5 159.5,117 200.5,116.7 344.5,116.6 344.5,379.5 39.5,379.5 39.6,281.5 40.1,219.5 40.6,192.5 41.2,170.5 41.5,163.1 42.5,152.5 45.5,151.7 49.5,150.3 52.5,149.1 55.5,147.6 58.5,145.9 61.5,144 64.5,141.7 66.5,140 68.5,138.1 70.9,135.5 72.5,133.4 74.4,130.5 75.9,127.5 76.7,125.5 77.2,123.5 77.7,120.5 80.7,119.5 85.5,118.9 90.5,118.6 103.5,118Z"/><path fill="#ff003b" d="M148.3,117.5 178.5,117.2 216.5,117 344.5,116.9 344.5,379.5 39.8,379.5 39.9,284.5 40.4,223.5 40.8,196.5 41.4,174.5 41.5,170.8 42.5,158.5 46.5,157.3 49.5,156.1 53.5,154.3 56.5,152.7 60.5,150.3 63.5,148.1 66.5,145.7 68.9,143.5 71.5,140.8 73.5,138.5 75.8,135.5 77.7,132.5 79.2,129.5 80.4,126.5 81.2,123.5 81.7,120.5 85.8,119.5 91.5,119 98.5,118.6 118.5,118Z"/><path fill="#ff0040" d="M189.1,117.5 247.5,117.3 344.5,117.3 344.5,379.5 40.1,379.5 40.2,287.5 40.6,227.5 41,201.5 41.5,179.9 42.5,165.4 46.5,164 50.5,162.3 54.5,160.3 57.5,158.6 61.5,155.9 64.5,153.7 68.5,150.3 71.4,147.5 74.5,144 78.1,139.5 80.3,136.5 82.1,133.5 83.6,130.5 84.8,127.5 85.9,123.5 86.4,120.5 92,119.5 100.5,119 112.5,118.6 145.5,117.9Z"/><path fill="#ff0045" d="M131,118.5 162.5,118.1 202.5,117.8 344.5,117.6 344.5,379.5 40.4,379.5 40.5,290.5 40.8,232.5 41.5,191 42.5,173.4 46.5,171.8 51.5,169.4 55.5,167.2 60.5,163.9 64.5,160.8 68.5,157.4 72.5,153.5 75.5,150.3 79.5,150.3 79.8,149.5 79.3,148.5 79.1,147.5 79.1,145.5 81.6,142.5 83.9,139.5 85.9,136.5 87.6,133.5 89.1,130.5 90.2,127.5 91.2,124.5 92,120.5 96.5,119.8 100.5,119.4 113.5,118.9Z"/><path fill="#ff004b" d="M154.4,118.5 220.5,118.1 344.5,118 344.5,379.5 40.7,379.5 40.8,294.5 41.1,237.5 41.5,205.4 42.5,182.9 46.5,181.1 51.5,178.4 55.5,175.9 59.5,173.1 63.5,170 67.5,166.5 71.5,162.6 75.5,158.3 87.5,158.3 87.7,157.5 85.5,154.5 85.4,145.5 87.9,142.5 90.2,139.5 92.2,136.5 93.9,133.5 95.8,129.5 97,126.5 97.9,123.5 98.7,120.5 106.5,119.7 111.5,119.4 130.5,118.9Z"/><path fill="#ff0050" d="M200.8,118.5 344.5,118.3 344.5,379.5 41,379.5 41,298.5 41.3,243.5 41.5,224.5 42.5,194.8 47.5,191.8 51.5,189.2 55.5,186.4 59.5,183.3 63.5,179.9 67.5,176.1 71.5,172 75.5,167.5 97.5,167.5 92.6,161.5 92.6,145.5 95.1,142.5 97.4,139.5 99.5,136.5 101.3,133.5 102.9,130.5 104.3,127.5 105.8,123.5 106.7,120.5 120.5,119.5 131.5,119.2 161.5,118.8Z"/><path fill="#ff0056" d="M136.3,119.5 166.5,119.1 205.5,118.8 344.5,118.7 344.5,379.5 41.2,379.5 41.3,309.5 41.5,259 41.9,232.5 42.5,210.2 51.5,203.1 56.5,198.8 60.5,195 64.5,191.1 68.5,186.8 72.5,182.2 75.5,178.6 108.5,178.6 101.4,170.5 101,169.5 101,145.5 103.7,142.5 106.1,139.5 108.3,136.5 110.3,133.5 112.1,130.5 113.7,127.5 115.1,124.5 116.7,120.5Z"/><path fill="#ff005d" d="M160.4,119.5 224.5,119.1 344.5,119 344.5,379.5 41.6,379.5 41.8,290.5 42.1,258.5 42.5,232.5 55.5,217.7 62.5,209.4 69.5,200.7 75.5,192.5 122.5,192.5 111.5,180.5 111.3,179.5 111.3,145.5 114.3,142.5 117,139.5 121.8,133.5 125.9,127.5 127.7,124.5 129.9,120.5 143.5,120Z"/><path fill="#ff0063" d="M215.7,119.5 344.5,119.4 344.5,379.5 42.1,379.5 42.2,319.5 42.5,273.3 45.2,266.5 47.9,260.5 50.9,254.5 54,248.5 60.8,236.5 75.5,211.7 141.5,211.7 141.5,211.5 125.5,194.5 124.9,193.5 124.9,145.5 130.6,140.5 136.7,134.5 143.1,127.5 148.9,120.5 177.5,119.9Z"/><path fill="#ff006a" d="M183.4,120.5 242.5,120.1 344.5,119.9 344.5,379.5 51.4,379.5 51.5,369.5 51.7,359.5 52.2,349.5 52.8,340.5 53.6,331.5 54.6,322.5 55.8,313.5 57.1,305.5 58.7,297.5 60.4,289.5 62.2,282.5 64.4,274.5 66.9,266.5 69.2,259.5 72.1,251.5 75.5,242.7 172.5,242.7 172.5,242.5 145.5,214.5 145.1,213.5 145.1,145.5 170.5,128.4 177.5,123.9Z"/><path fill="#ff0070" d="M323.5,126.5 344.5,126.4 344.5,379.5 74.6,379.5 74.8,361.5 75.5,344.6 274.5,344.6 274.5,344.5 218.5,288.1 184.5,253.5 184.2,252.5 184.2,145.5 191.5,143 198.5,140.8 205.5,138.8 212.5,137 219.5,135.4 227.5,133.8 234.5,132.6 242.5,131.4 250.5,130.4 259.5,129.5 278.5,128 299.5,127.1Z"/></g>
<g fill="none" stroke="#1a0a14" stroke-width="1" shape-rendering="crispEdges">
<path d="M-0.500,0.500H102.500V52.500H342.500V146.500H76.500V378.500H-0.500Z"/>
<path d="M42.500,378.500V17.500H67.500V120.500H342.500"/>
<path d="M84.500,0.500V69.500H342.500"/>
<path d="M84.500,52.500H102.500"/>
</g>
<g fill="#fff" stroke="#000" stroke-width="1" transform="translate(-.8,-.7)"><path d="M-0.5,-2l2.5,2.5-2.5,2.5-2.5-2.5z"/><path d="M102.5,-2l2.5,2.5-2.5,2.5-2.5-2.5z"/><path d="M102.5,51l1.5,1.5-1.5,1.5-1.5-1.5z"/><path d="M342.5,50l2.5,2.5-2.5,2.5-2.5-2.5z"/><path d="M342.5,144l2.5,2.5-2.5,2.5-2.5-2.5z"/><path d="M76.5,144l2.5,2.5-2.5,2.5-2.5-2.5z" fill="#a01030"/><path d="M-0.5,376l2.5,2.5-2.5,2.5-2.5-2.5z"/><path d="M76.5,376l2.5,2.5-2.5,2.5-2.5-2.5z"/></g>
</svg>
<div class="bn" style="left:915px;top:220.5px">7</div><div class="bn" style="left:975px;top:253.5px">6</div><div class="bn" style="left:1087px;top:272.5px">5</div><div class="bn" style="left:1215px;top:326.5px">4</div><div class="bn" style="left:1073.5px;top:380px">3</div><div class="bn" style="left:949.3px;top:489.1px">2</div><div class="bn" style="left:856.9px;top:416px">8</div><div class="bn" style="left:902.2px;top:611.9px">1</div>

<!-- legend -->
<div class="a" id="tempbtn">Temp [<span class="cj2" style="font-size:12px">癈</span>]</div>
<div class="lb" style="top:192px;background:#ff0080"></div><div class="lt" style="top:196.5px">20</div>
<div class="lb" style="top:214px;background:#ff0050"></div><div class="lt" style="top:218.5px">17.75</div>
<div class="lb" style="top:236px;background:#ff0028"></div><div class="lt" style="top:240.5px">15.5</div>
<div class="lb" style="top:258px;background:#ff1400"></div><div class="lt" style="top:262.5px">13.25</div>
<div class="lb" style="top:280px;background:#ff5000"></div><div class="lt" style="top:284.5px">11</div>
<div class="lb" style="top:302px;background:#ff8200"></div><div class="lt" style="top:306.5px">8.75</div>
<div class="lb" style="top:324px;background:#ffaa00"></div><div class="lt" style="top:328.5px">6.5</div>
<div class="lb" style="top:346px;background:#ffdc00"></div><div class="lt" style="top:350.5px">4.25</div>
<div class="lb" style="top:368px;background:#e1ff00"></div><div class="lt" style="top:372.5px">2</div>
<div class="lb" style="top:390px;background:#aaff00"></div><div class="lt" style="top:394.5px">-0.25</div>
<div class="lb" style="top:412px;background:#6ef500"></div><div class="lt" style="top:416.5px">-2.5</div>
<div class="lb" style="top:434px;background:#00f0a0"></div><div class="lt" style="top:438.5px">-4.75</div>
<div class="lb" style="top:456px;background:#00f0d7"></div><div class="lt" style="top:460.5px">-7</div>
<div class="lb" style="top:478px;background:#00d7fa"></div><div class="lt" style="top:482.5px">-9.25</div>
<div class="lb" style="top:500px;background:#00a0fa"></div><div class="lt" style="top:504.5px">-11.5</div>
<div class="lb" style="top:522px;background:#0073f5"></div><div class="lt" style="top:526.5px">-13.75</div>
<div class="lb" style="top:544px;background:#0050fa"></div><div class="lt" style="top:548.5px">-16</div>
<div class="lb" style="top:566px;background:#001efa"></div><div class="lt" style="top:570.5px">-18.25</div>
<div class="lb" style="top:588px;background:#1400ff"></div><div class="lt" style="top:592.5px">-20.5</div>
<div class="lb" style="top:610px;background:#4600fa"></div><div class="lt" style="top:614.5px">-22.75</div>
<div class="lb" style="top:632px;background:#8c00ff"></div><div class="lt" style="top:636.5px">-25</div>

<svg class="a" style="left:1476px;top:676px" width="60" height="20" viewBox="0 0 60 20"><g fill="none" stroke="#222" stroke-width="1.600"><circle cx="6.500" cy="7" r="4.800" fill="#f3e6ea"/><circle cx="24.500" cy="7" r="4.800" fill="#f3e6ea"/></g><g stroke="#111" stroke-width="2.400" stroke-linecap="round"><path d="M10.500 11.500L15.500 16.500M28.500 11.500L33.500 16.500"/></g><g stroke="#a02040" stroke-width="1"><path d="M4 7h5M22 7h5M24.500 4.500v5"/></g><path d="M43.500 1.500l4.500 8.500h-3v7h-3v-7h-3z" fill="#c80808" stroke="#500" stroke-width=".7"/><path d="M54.500 10h4v-7h3v7h3l-5 8z" fill="#c80808" stroke="#500" stroke-width=".7"/></svg>
</body></html>
